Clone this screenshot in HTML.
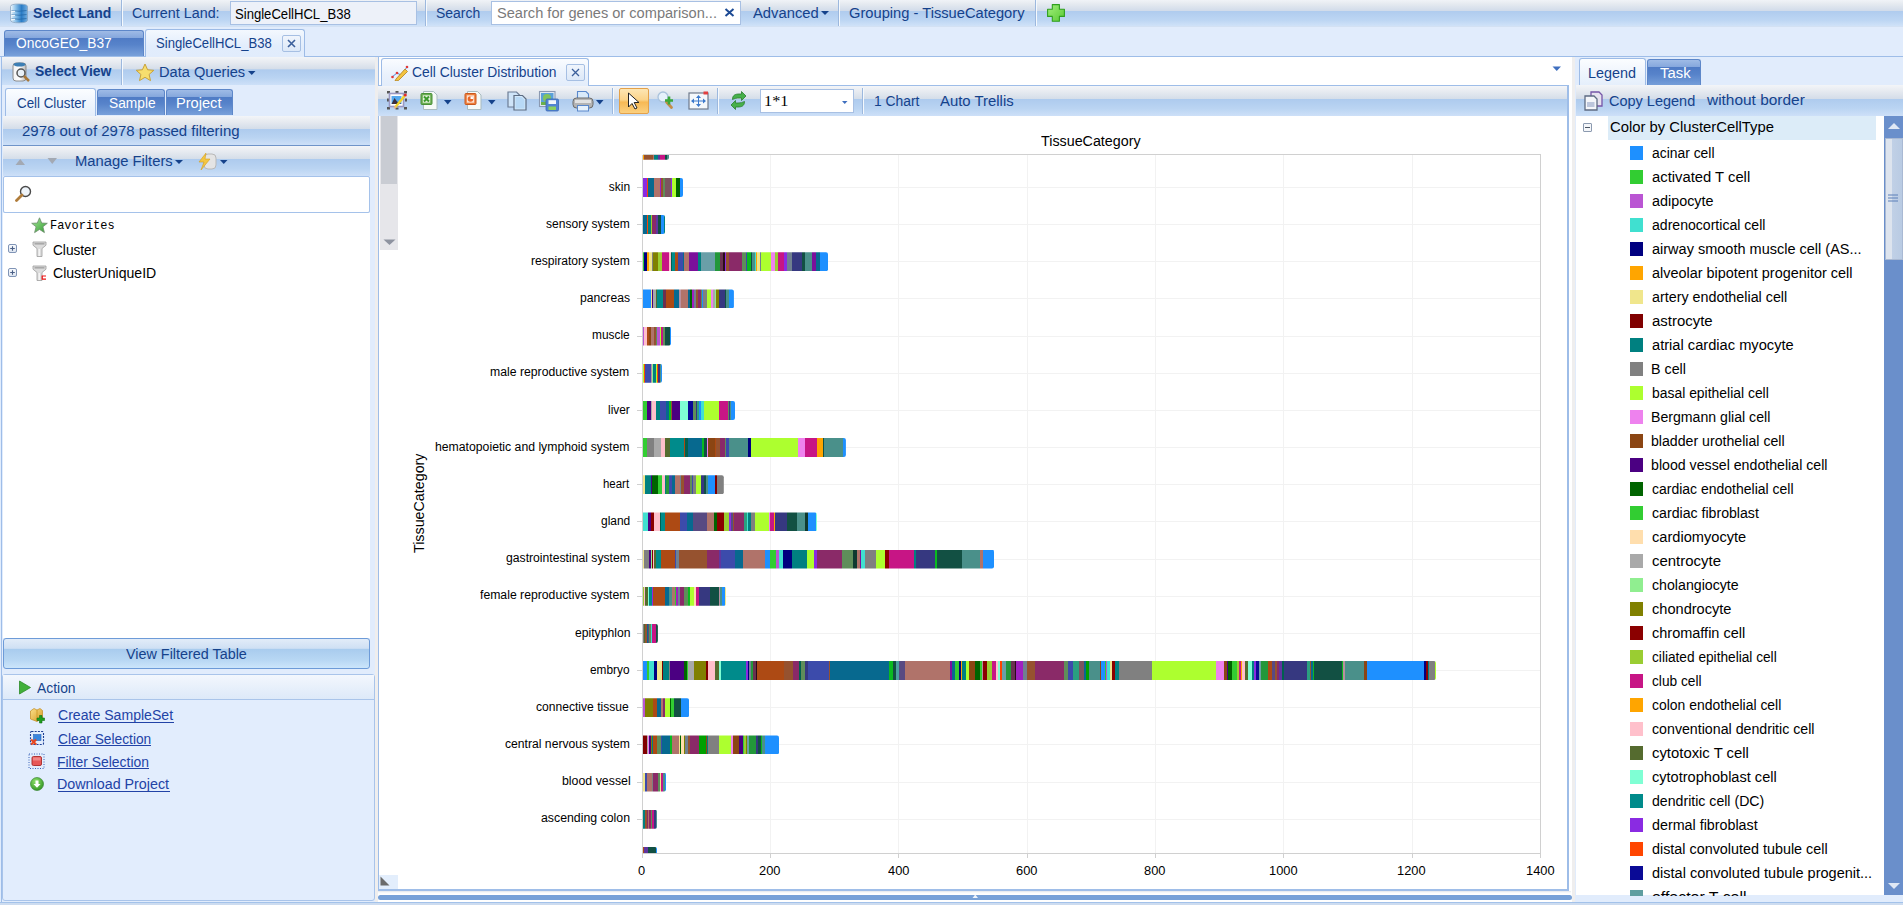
<!DOCTYPE html>
<html><head><meta charset="utf-8"><style>
*{box-sizing:border-box;margin:0;padding:0}
html,body{width:1903px;height:905px;overflow:hidden;background:#e1ecfc;font-family:"Liberation Sans",sans-serif}
.a{position:absolute}
.t{position:absolute;white-space:nowrap;transform-origin:0 0}
svg{position:absolute;overflow:hidden}
</style></head><body>
<div class="a" style="left:0px;top:0px;width:1903px;height:27px;background:linear-gradient(#f0f3f7 0%,#e5eaf0 15%,#d2dcea 39%,#afcbee 40%,#bdd6f3 75%,#d3e4f9 100%);"></div>
<div class="a" style="left:0px;top:26px;width:1903px;height:1px;background:#d3e1f3"></div>
<div class="a" style="left:121px;top:0px;width:1px;height:26px;background:#9cb8de;box-shadow:1px 0 0 #f5f9fd;"></div>
<div class="a" style="left:425px;top:0px;width:1px;height:26px;background:#9cb8de;box-shadow:1px 0 0 #f5f9fd;"></div>
<div class="a" style="left:838px;top:0px;width:1px;height:26px;background:#9cb8de;box-shadow:1px 0 0 #f5f9fd;"></div>
<div class="a" style="left:1035px;top:0px;width:1px;height:26px;background:#9cb8de;box-shadow:1px 0 0 #f5f9fd;"></div>
<div class="a" style="left:230px;top:1px;width:187px;height:24px;background:#edf1f9;border:1px solid #a8c0e3"></div>
<div class="a" style="left:491px;top:1px;width:250px;height:24px;background:#fff;border:1px solid #a8c0e3"></div>
<svg style="left:724px;top:8px" width="11" height="9"><path d="M1.5 1L9.5 8M9.5 1L1.5 8" stroke="#1c4a94" stroke-width="2"/></svg>
<svg style="left:821px;top:11px" width="9" height="5"><path d="M0 0H8L4 4Z" fill="#15428b"/></svg>
<svg style="left:9px;top:3px" width="20" height="21" viewBox="0 0 20 21"><defs><linearGradient id="dbg" x1="0" x2="1"><stop offset="0" stop-color="#f4f9fd"/><stop offset=".3" stop-color="#8cc2ea"/><stop offset=".65" stop-color="#2a7cc6"/><stop offset="1" stop-color="#74aee0"/></linearGradient></defs>
<path d="M1.5 3.5Q1.5 1 10 1Q18.5 1 18.5 3.5V17Q18.5 19.8 10 19.8Q1.5 19.8 1.5 17Z" fill="url(#dbg)" stroke="#8aa6c2" stroke-width=".8"/>
<path d="M2.5 7.5Q10 9 17.5 7.5M2.5 11.5Q10 13 17.5 11.5M2.5 15.5Q10 17 17.5 15.5" stroke="#1f5f9e" stroke-width=".9" fill="none" opacity=".7"/><path d="M2.5 8.3H6M2.5 12.3H6M2.5 16.3H6" stroke="#fff" stroke-width="1"/></svg>
<svg style="left:1047px;top:4px" width="18" height="18" viewBox="0 0 18 18"><defs><linearGradient id="gp" x1="0" y1="0" x2="1" y2="1"><stop offset="0" stop-color="#a3f07c"/><stop offset="1" stop-color="#58c834"/></linearGradient></defs><path d="M5.3 0.6H12.4V5.3H17.4V12.4H12.4V17.2H5.3V12.4H0.6V5.3H5.3Z" fill="url(#gp)" stroke="#2f9f1e" stroke-width="1.1" stroke-linejoin="round"/></svg>
<div class="a" style="left:4px;top:30px;width:140px;height:26px;background:linear-gradient(#9fbbe6 0%,#86a8dd 26%,#4f7bc5 28%,#5783ca 55%,#78a0da 100%);border:1px solid #5d87c9;border-bottom:none;border-radius:3px 3px 0 0;"></div>
<div class="a" style="left:145px;top:29px;width:160px;height:28px;background:linear-gradient(#fbfdff 0%,#e4eefb 100%);border:1px solid #9dbbe6;border-bottom:none;border-radius:3px 3px 0 0;background:linear-gradient(#f3f8fe 0%,#e2edfc 60%,#e1ecfc 100%);"></div>
<div class="a" style="left:282px;top:35px;width:19px;height:17px;border:1px solid #a6bfe3;border-radius:2px;background:linear-gradient(#f0f5fc,#dce8f8)"></div>
<svg style="left:287px;top:39px" width="9" height="9"><path d="M1 1L8 8M8 1L1 8" stroke="#3b5f9b" stroke-width="1.6"/></svg>
<div class="a" style="left:1px;top:57px;width:374px;height:845px;background:#e1ecfc;border-left:1px solid #9ebde8"></div>
<div class="a" style="left:2px;top:57px;width:373px;height:28px;background:linear-gradient(#f3f5f8 0%,#e6eaf0 20%,#d4dde9 44%,#aecbee 45%,#bad4f2 75%,#cde0f8 100%);"></div>
<div class="a" style="left:121px;top:59px;width:1px;height:26px;background:#9cb8de;box-shadow:1px 0 0 #f5f9fd;"></div>
<svg style="left:248px;top:71px" width="8" height="5"><path d="M0 0H7.5L3.75 4Z" fill="#15428b"/></svg>
<svg style="left:12px;top:61px" width="19" height="22" viewBox="0 0 19 22"><defs><linearGradient id="svg1" x1="0" x2="1"><stop offset="0" stop-color="#f2f2f2"/><stop offset=".5" stop-color="#ffffff"/><stop offset="1" stop-color="#b9b9b9"/></linearGradient></defs>
<rect x="1" y="2" width="13" height="18" rx="3" fill="url(#svg1)" stroke="#8d8d8d"/><ellipse cx="7.5" cy="3.5" rx="6" ry="2" fill="#3d7fb5"/>
<circle cx="9" cy="12" r="4" fill="#e9f1f8" stroke="#555" stroke-width="1.5"/><path d="M12 15L17 20" stroke="#a8783a" stroke-width="2.5"/></svg>
<svg style="left:135px;top:63px" width="20" height="19" viewBox="0 0 20 19"><path d="M10 1L12.6 6.8L18.8 7.3L14.1 11.4L15.5 17.6L10 14.3L4.5 17.6L5.9 11.4L1.2 7.3L7.4 6.8Z" fill="#f7de6e" stroke="#c9a23a" stroke-width="1"/></svg>
<div class="a" style="left:5px;top:88px;width:91px;height:28px;background:linear-gradient(#fbfdff 0%,#e4eefb 100%);border:1px solid #9dbbe6;border-bottom:none;border-radius:3px 3px 0 0;"></div>
<div class="a" style="left:97px;top:89px;width:68px;height:26px;background:linear-gradient(#9fbbe6 0%,#86a8dd 26%,#4f7bc5 28%,#5783ca 55%,#78a0da 100%);border:1px solid #5d87c9;border-bottom:none;border-radius:3px 3px 0 0;"></div>
<div class="a" style="left:166px;top:89px;width:67px;height:26px;background:linear-gradient(#9fbbe6 0%,#86a8dd 26%,#4f7bc5 28%,#5783ca 55%,#78a0da 100%);border:1px solid #5d87c9;border-bottom:none;border-radius:3px 3px 0 0;"></div>
<div class="a" style="left:3px;top:116px;width:367px;height:29px;background:linear-gradient(#f3f5f8 0%,#e6eaf0 20%,#d4dde9 44%,#aecbee 45%,#bad4f2 75%,#cde0f8 100%);"></div>
<div class="a" style="left:3px;top:145px;width:367px;height:1px;background:#6f94c9"></div>
<div class="a" style="left:3px;top:146px;width:367px;height:30px;background:linear-gradient(#f3f5f8 0%,#e6eaf0 20%,#d4dde9 44%,#aecbee 45%,#bad4f2 75%,#cde0f8 100%);"></div>
<svg style="left:15px;top:158px" width="11" height="8"><path d="M0.5 7H10L5.25 1Z" fill="#a3a9b3"/></svg>
<svg style="left:47px;top:157px" width="11" height="8"><path d="M0.5 1H10L5.25 7Z" fill="#a3a9b3"/></svg>
<svg style="left:175px;top:160px" width="9" height="5"><path d="M0 0H8L4 4Z" fill="#15428b"/></svg>
<svg style="left:197px;top:152px" width="21" height="19" viewBox="0 0 21 19"><rect x="7" y="2" width="12" height="15" rx="4" fill="#e4e4e4" stroke="#b8b8b8"/><path d="M9 1L2 10H7L4 18L13 7H8Z" fill="#f3c641" stroke="#d59d1c" stroke-width=".6"/></svg>
<svg style="left:220px;top:160px" width="8" height="5"><path d="M0 0H7.5L3.75 4Z" fill="#15428b"/></svg>
<div class="a" style="left:3px;top:176px;width:367px;height:37px;background:#fff;border:1px solid #a5c2ea;border-radius:2px"></div>
<svg style="left:15px;top:185px" width="18" height="18" viewBox="0 0 18 18"><circle cx="10.5" cy="6.5" r="5" fill="#eef4fa" stroke="#4a4a4a" stroke-width="1.4"/><path d="M7 10L1.5 15.5" stroke="#b07c3a" stroke-width="2.8" stroke-linecap="round"/></svg>
<div class="a" style="left:3px;top:213px;width:367px;height:425px;background:#fff"></div>
<svg style="left:31px;top:217px" width="17" height="17" viewBox="0 0 17 17"><defs><linearGradient id="stg" x1="0" y1="0" x2="1" y2="1"><stop offset="0" stop-color="#a8e89a"/><stop offset="1" stop-color="#2f9a2f"/></linearGradient></defs><path d="M8.5 0.8L10.7 6L16.3 6.3L11.9 9.8L13.4 15.6L8.5 12.4L3.6 15.6L5.1 9.8L0.7 6.3L6.3 6Z" fill="url(#stg)" stroke="#6d8c6d" stroke-width=".8"/></svg>
<div class="a" style="left:8px;top:244px;width:9px;height:9px;border:1px solid #8094b6;border-radius:2px;background:linear-gradient(#f8fafd,#dde5f0)"></div>
<svg style="left:8px;top:244px" width="9" height="9"><path d="M2.2 4.5H6.8M4.5 2.2V6.8" stroke="#4a5f86" stroke-width="1.1"/></svg>
<div class="a" style="left:8px;top:268px;width:9px;height:9px;border:1px solid #8094b6;border-radius:2px;background:linear-gradient(#f8fafd,#dde5f0)"></div>
<svg style="left:8px;top:268px" width="9" height="9"><path d="M2.2 4.5H6.8M4.5 2.2V6.8" stroke="#4a5f86" stroke-width="1.1"/></svg>
<svg style="left:32px;top:241px" width="15" height="17" viewBox="0 0 15 17"><path d="M1 1H14V4.2L10 7.5V15.5H5V7.5L1 4.2Z" fill="#dcdcdc" stroke="#9d9d9d" stroke-width=".8"/><rect x="2.5" y="2" width="10" height="1.6" fill="#a9a9a9"/><rect x="6.5" y="8" width="1.5" height="7" fill="#f4f4f4"/></svg>
<svg style="left:32px;top:265px" width="15" height="17" viewBox="0 0 15 17"><path d="M1 1H14V4.2L10 7.5V15.5H5V7.5L1 4.2Z" fill="#dcdcdc" stroke="#9d9d9d" stroke-width=".8"/><rect x="2.5" y="2" width="10" height="1.6" fill="#a9a9a9"/><rect x="6.5" y="8" width="1.5" height="7" fill="#f4f4f4"/><path d="M14 11H10.2V14.2H14" fill="none" stroke="#ee1010" stroke-width="1.2"/></svg>
<div class="a" style="left:3px;top:638px;width:367px;height:31px;border:1px solid #6d9bd8;border-radius:3px;background:linear-gradient(#e2ecf8 0%,#cfe0f4 32%,#a9ccee 36%,#b9d8f4 75%,#cbe5fb 100%)"></div>
<div class="a" style="left:2px;top:674px;width:373px;height:227px;border:1px solid #a9c4ea;border-radius:3px 3px 3px 3px;background:#e2edfd"></div>
<div class="a" style="left:3px;top:675px;width:371px;height:24px;background:linear-gradient(#f3f7fd,#dde9f9)"></div>
<div class="a" style="left:3px;top:699px;width:371px;height:1px;background:#a9c4ea"></div>
<svg style="left:18px;top:680px" width="14" height="15" viewBox="0 0 14 15"><path d="M1.5 1L12.5 7.5L1.5 14Z" fill="#41b03a" stroke="#2b8a27" stroke-width=".8"/></svg>
<div class="a" style="left:58px;top:722px;width:116px;height:1px;background:#2243a6"></div>
<div class="a" style="left:58px;top:745px;width:93px;height:1px;background:#2243a6"></div>
<div class="a" style="left:58px;top:768px;width:91px;height:1px;background:#2243a6"></div>
<div class="a" style="left:58px;top:791px;width:112px;height:1px;background:#2243a6"></div>
<svg style="left:29px;top:707px" width="17" height="17" viewBox="0 0 17 17"><defs><linearGradient id="gold" x1="0" x2="1" y1="0" y2="1"><stop offset="0" stop-color="#fbe08a"/><stop offset="1" stop-color="#d69a22"/></linearGradient></defs><path d="M1.5 4L5 1.5L8 3L11 1.5L13.5 3.5V11L8 14.5L1.5 12Z" fill="url(#gold)" stroke="#c18a1c" stroke-width=".7"/><path d="M8 3V14" stroke="#c99524" stroke-width=".8"/><path d="M10.5 8.5H13V11H15.5V13.5H13V16H10.5V13.5H8V11H10.5Z" fill="#1e9e1e" stroke="#127012" stroke-width=".6"/></svg>
<svg style="left:29px;top:730px" width="16" height="16" viewBox="0 0 16 16"><rect x="1.5" y="1.5" width="13" height="13" rx="1" fill="none" stroke="#1d3f94" stroke-width="1.1" stroke-dasharray="2 1.2"/><rect x="4.5" y="4.5" width="7.5" height="6" fill="#3a86de" stroke="#2a62b5" stroke-width=".6"/><path d="M2.2 9.5L7.2 14.5M7.2 9.5L2.2 14.5" stroke="#e8461e" stroke-width="2"/></svg>
<svg style="left:28px;top:753px" width="17" height="16" viewBox="0 0 17 16"><rect x="1" y="1" width="15" height="14.5" fill="none" stroke="#3a63b8" stroke-width="1" stroke-dasharray="1 1.5"/><rect x="4" y="3.5" width="9.5" height="9" rx="1.5" fill="#e85858" stroke="#a82828" stroke-width=".9"/><rect x="5" y="4.5" width="7.5" height="3" fill="#f59a9a" opacity=".7"/></svg>
<svg style="left:30px;top:777px" width="14" height="14" viewBox="0 0 14 14"><defs><radialGradient id="dg" cx=".4" cy=".3" r=".8"><stop offset="0" stop-color="#8ddf6a"/><stop offset="1" stop-color="#2b8f1e"/></radialGradient></defs><circle cx="7" cy="7" r="6.5" fill="url(#dg)" stroke="#2a7a22" stroke-width=".6"/><path d="M5.5 3.5H8.5V7H10.5L7 10.8L3.5 7H5.5Z" fill="#fff"/></svg>
<div class="a" style="left:375px;top:57px;width:3px;height:845px;background:#efeeee"></div>
<div class="a" style="left:1572px;top:57px;width:3px;height:845px;background:#efeeee"></div>
<div class="a" style="left:378px;top:56px;width:1194px;height:846px;background:#fff"></div>
<div class="a" style="left:378px;top:56px;width:1191px;height:30px;background:#fff;border-top:1px solid #9ebde8"></div>
<div class="a" style="left:378px;top:57px;width:1px;height:834px;background:#9ebde8"></div>
<svg style="left:1552px;top:66px" width="10" height="6"><path d="M0.5 0.5H9L4.75 5Z" fill="#3f6fbf"/></svg>
<div class="a" style="left:378px;top:85px;width:1191px;height:31px;background:linear-gradient(#f3f5f8 0%,#e6eaf0 20%,#d4dde9 44%,#aecbee 45%,#bad4f2 75%,#cde0f8 100%);border-top:1px solid #9ebde8;border-right:2px solid #9ebde8"></div>
<div class="a" style="left:381px;top:58px;width:208px;height:28px;background:linear-gradient(#fbfdff 0%,#e4eefb 100%);border:1px solid #9dbbe6;border-bottom:none;border-radius:3px 3px 0 0;background:linear-gradient(#fafcff 0%,#e9f1fc 60%,#e3edfb 100%);"></div>
<div class="a" style="left:612px;top:88px;width:1px;height:26px;background:#9cb8de;box-shadow:1px 0 0 #f5f9fd;"></div>
<div class="a" style="left:717px;top:88px;width:1px;height:26px;background:#9cb8de;box-shadow:1px 0 0 #f5f9fd;"></div>
<div class="a" style="left:862px;top:88px;width:1px;height:26px;background:#9cb8de;box-shadow:1px 0 0 #f5f9fd;"></div>
<svg style="left:391px;top:64px" width="18" height="17" viewBox="0 0 18 17"><path d="M1 13L6 9L10 11L16 3" fill="none" stroke="#3b7dd8" stroke-width=".9"/><circle cx="1.5" cy="13" r="1.3" fill="#e03a3a"/><circle cx="6" cy="9" r="1.3" fill="#e03a3a"/><circle cx="16" cy="3" r="1.3" fill="#e03a3a"/><path d="M5 15L14 5L16.5 7.5L7.5 16.5L4 17Z" fill="#f4c440" stroke="#b3811d" stroke-width=".8"/></svg>
<div class="a" style="left:566px;top:64px;width:19px;height:17px;border:1px solid #a6bfe3;border-radius:2px;background:linear-gradient(#f0f5fc,#dce8f8)"></div>
<svg style="left:571px;top:68px" width="9" height="9"><path d="M1 1L8 8M8 1L1 8" stroke="#3b5f9b" stroke-width="1.3"/></svg>
<div class="a" style="left:619px;top:88px;width:30px;height:26px;border:1px solid #e3a14a;border-radius:2px;background:linear-gradient(#fde6b4 0%,#fbd389 45%,#f7b955 55%,#fbd07f 100%)"></div>
<svg style="left:627px;top:92px" width="14" height="18" viewBox="0 0 14 18"><path d="M1.5 1V15L5 11.5L8 17L10 16L7.2 10.5H12Z" fill="#fff" stroke="#222" stroke-width="1"/></svg>
<div class="a" style="left:760px;top:89px;width:94px;height:24px;background:#fff;border:1px solid #a8c0e3"></div>
<svg style="left:842px;top:101px" width="6" height="3"><path d="M0 0H5.5L2.75 3Z" fill="#3f6fbf"/></svg>
<svg style="left:386px;top:90px" width="22" height="21" viewBox="0 0 22 21"><g fill="#555"><rect x="1" y="1" width="3" height="2.5"/><rect x="9.5" y="1" width="3" height="2"/><rect x="18" y="1" width="3" height="2.5"/><rect x="1" y="8.5" width="2" height="3"/><rect x="19" y="8.5" width="2" height="3"/><rect x="1" y="17" width="3" height="2.5"/><rect x="9.5" y="17.5" width="3" height="2"/><rect x="18" y="17" width="3" height="2.5"/></g>
<rect x="3.5" y="3.5" width="14" height="13" fill="#fff" stroke="#9a98c2" stroke-width="1.6"/><rect x="5.5" y="6" width="10" height="8" fill="#56a8ee"/><path d="M5.5 14L8.5 8L11 11.5L15.5 14Z" fill="#3a3040"/><path d="M9 17.5L18.5 6" stroke="#f2d42a" stroke-width="2.4"/><path d="M8.6 18.5L9.6 16.2" stroke="#f0b08a" stroke-width="1.6"/><circle cx="19.3" cy="5" r="1.5" fill="#e02828"/></svg>
<svg style="left:420px;top:90px" width="19" height="21" viewBox="0 0 19 21"><path d="M3.5 1.5H13.5L17 5V19.5H3.5Z" fill="#f6faf8" stroke="#a9bbc0" stroke-width="1"/><rect x="1" y="3.5" width="11" height="11" rx="1" fill="#6aad52" stroke="#4a9038" stroke-width="1"/><rect x="2.8" y="5.3" width="7.4" height="7.4" fill="#e4f1dc"/><path d="M4 6.5L9 11.5M9 6.5L4 11.5" stroke="#3c9a2c" stroke-width="2"/></svg>
<svg style="left:464px;top:90px" width="19" height="21" viewBox="0 0 19 21"><path d="M3.5 1.5H13.5L17 5V19.5H3.5Z" fill="#f6faf8" stroke="#a9bbc0" stroke-width="1"/><rect x="1" y="3.5" width="11" height="11" rx="1" fill="#ee7f3c" stroke="#c9581e" stroke-width="1"/><rect x="2.8" y="5.3" width="7.4" height="7.4" fill="#fbe3d4"/><circle cx="6.5" cy="9" r="2.8" fill="#e8672a"/><path d="M6.5 9V6.2A2.8 2.8 0 0 1 9.3 9Z" fill="#fff"/></svg>
<svg style="left:444px;top:100px" width="8" height="5"><path d="M0 0H7.5L3.75 4.5Z" fill="#15428b"/></svg>
<svg style="left:488px;top:100px" width="8" height="5"><path d="M0 0H7.5L3.75 4.5Z" fill="#15428b"/></svg>
<svg style="left:596px;top:100px" width="8" height="5"><path d="M0 0H7.5L3.75 4.5Z" fill="#15428b"/></svg>
<svg style="left:506px;top:90px" width="22" height="21" viewBox="0 0 22 21"><path d="M2 2H10.5L13.5 5V17H2Z" fill="#cfe4f8" stroke="#6d7d95" stroke-width="1.2"/><path d="M8 5.5H16.5L20 9V20H8Z" fill="#d3e8fb" stroke="#5d6c82" stroke-width="1.2"/><path d="M9.5 7H15.5L18.5 10V18.5H9.5Z" fill="#b8d9f6"/></svg>
<svg style="left:538px;top:90px" width="22" height="22" viewBox="0 0 22 22"><rect x="1.5" y="1.5" width="15.5" height="15" fill="#e4ecf4" stroke="#8b99b2" stroke-width="1.1"/><rect x="3" y="3" width="12.5" height="12" fill="#5aa0d8"/><circle cx="9" cy="8" r="4" fill="#82c45e"/><rect x="3" y="12" width="12.5" height="3" fill="#6ab04a"/><rect x="8" y="9" width="12.5" height="12" rx="1.2" fill="#5184d2" stroke="#3b68b4" stroke-width=".8"/><rect x="10.5" y="10.2" width="7.5" height="3.8" fill="#f2f6fc"/><rect x="10.5" y="16.5" width="7.5" height="3.5" fill="#8cd060"/></svg>
<svg style="left:572px;top:90px" width="22" height="22" viewBox="0 0 22 22"><path d="M5.5 1.5H14L16.5 4V10H5.5Z" fill="#d9eafa" stroke="#5a88cc" stroke-width="1.1"/><rect x="1" y="8" width="20" height="10" rx="3.5" fill="#b4b4b4" stroke="#6a6a6a" stroke-width="1"/><rect x="3" y="10" width="16" height="3" fill="#e2e2e2"/><rect x="5.5" y="15.5" width="11" height="5.5" fill="#e6f1fc" stroke="#5a88cc" stroke-width="1"/></svg>
<svg style="left:656px;top:90px" width="20" height="20" viewBox="0 0 20 20"><circle cx="7" cy="7" r="5" fill="#e6f1fb" stroke="#a9c2dc" stroke-width="1.3"/><path d="M10.5 12L15.5 17.5" stroke="#c48d48" stroke-width="2.8" stroke-linecap="round"/><path d="M9 10.5H17M13 6.5V14.5" stroke="#3aa83a" stroke-width="2.6"/></svg>
<svg style="left:688px;top:90px" width="21" height="21" viewBox="0 0 21 21"><rect x="1" y="3" width="19" height="16" fill="#f4f8fc" stroke="#6e7a8c" stroke-width="1.2"/><path d="M10.5 5L13 8H8ZM10.5 17L13 14H8ZM3 11L6 8.5V13.5ZM18 11L15 8.5V13.5Z" fill="#3a78cc"/><path d="M10.5 8V14M6 11H15" stroke="#3a78cc" stroke-width="1"/><rect x="15.5" y="1.5" width="4.5" height="3" fill="#e24040"/></svg>
<svg style="left:730px;top:90px" width="17" height="21" viewBox="0 0 17 21"><path d="M2.5 9.5C2.5 5 5.5 4 9 4H11.5V1.5L16 6L11.5 10.5V8H9C6.5 8 4.5 8.5 2.5 9.5Z" fill="#46b04a" stroke="#2a7e2e" stroke-width=".8"/><path d="M14.5 11.5C14.5 16 11.5 17 8 17H5.5V19.5L1 15L5.5 10.5V13H8C10.5 13 12.5 12.5 14.5 11.5Z" fill="#46b04a" stroke="#2a7e2e" stroke-width=".8"/></svg>
<div class="a" style="left:379px;top:116px;width:1190px;height:775px;background:#fff;border-right:2px solid #9ebde8;border-bottom:2px solid #9ebde8"></div>
<div class="a" style="left:380px;top:116px;width:18px;height:134px;background:#e6e6ea"></div>
<div class="a" style="left:381px;top:116px;width:16px;height:68px;background:#c9ccd3"></div>
<svg style="left:383px;top:239px" width="13" height="7"><path d="M0.5 0.5H12.5L6.5 6Z" fill="#8e93a0"/></svg>
<div class="a" style="left:379px;top:875px;width:19px;height:14px;background:#e3eefc"></div>
<svg style="left:380px;top:876px" width="10" height="10"><path d="M0.5 0.5L9.5 9.5H0.5Z" fill="#6b6b6b"/></svg>
<div class="a" style="left:378px;top:895px;width:1194px;height:5px;background:#77a1d8;border-radius:3px"></div>
<svg style="left:972px;top:894px" width="7" height="5"><path d="M0.5 4H6L3.25 0.5Z" fill="#eef4fc"/></svg>
<div class="a" style="left:378px;top:891px;width:1193px;height:3px;background:linear-gradient(#e2e6ec,#f6f8fa 50%,#ffffff)"></div>
<div class="a" style="left:1575px;top:57px;width:328px;height:845px;background:#e1ecfc"></div>
<div class="a" style="left:1579px;top:58px;width:67px;height:28px;background:linear-gradient(#fbfdff 0%,#e4eefb 100%);border:1px solid #9dbbe6;border-bottom:none;border-radius:3px 3px 0 0;"></div>
<div class="a" style="left:1647px;top:59px;width:54px;height:27px;background:linear-gradient(#9fbbe6 0%,#86a8dd 26%,#4f7bc5 28%,#5783ca 55%,#78a0da 100%);border:1px solid #5d87c9;border-bottom:none;border-radius:3px 3px 0 0;"></div>
<div class="a" style="left:1576px;top:85px;width:327px;height:31px;background:linear-gradient(#f3f5f8 0%,#e6eaf0 20%,#d4dde9 44%,#aecbee 45%,#bad4f2 75%,#cde0f8 100%);"></div>
<svg style="left:1583px;top:90px" width="21" height="21" viewBox="0 0 21 21"><path d="M8 2H16L19 5V16H8Z" fill="#e6e2ef" stroke="#7656a8" stroke-width="1.3"/><path d="M2 6H11L14 9V20H2Z" fill="#f4f6fa" stroke="#5d6b82" stroke-width="1.3"/><rect x="4" y="12" width="7.5" height="5" fill="#bcc6dc"/></svg>
<div class="a" style="left:1576px;top:116px;width:308px;height:779px;background:#fff"></div>
<div class="a" style="left:1608px;top:116px;width:268px;height:24px;background:#dcecf8"></div>
<div class="a" style="left:1583px;top:123px;width:9px;height:9px;border:1px solid #8c9ab0;background:#f4f6f9;border-radius:1px"></div>
<svg style="left:1583px;top:123px" width="9" height="9"><path d="M2 4.5H7" stroke="#4b5563" stroke-width="1"/></svg>
<div class="a" style="left:1884px;top:116px;width:19px;height:779px;background:#6a8fcb"></div>
<div class="a" style="left:1885px;top:138px;width:18px;height:122px;background:linear-gradient(90deg,#dde4ee 0%,#dde4ee 35%,#c0d0e6 40%,#b9cbe3 100%);border:1px solid #a9b9d3"></div>
<svg style="left:1887px;top:122px" width="14" height="8"><path d="M1 7H13L7 1Z" fill="#dfe8f5"/></svg>
<svg style="left:1887px;top:882px" width="14" height="8"><path d="M1 1H13L7 7Z" fill="#dfe8f5"/></svg>
<svg style="left:1888px;top:194px" width="10" height="8"><path d="M0 1H10M0 4H10M0 7H10" stroke="#5b7fb8" stroke-width="1"/></svg>
<div class="a" style="left:1630px;top:146px;width:13px;height:14px;background:#1e90ff"></div>
<div class="a" style="left:1630px;top:170px;width:13px;height:14px;background:#32cd32"></div>
<div class="a" style="left:1630px;top:194px;width:13px;height:14px;background:#ba55d3"></div>
<div class="a" style="left:1630px;top:218px;width:13px;height:14px;background:#40e0d0"></div>
<div class="a" style="left:1630px;top:242px;width:13px;height:14px;background:#000080"></div>
<div class="a" style="left:1630px;top:266px;width:13px;height:14px;background:#ffa500"></div>
<div class="a" style="left:1630px;top:290px;width:13px;height:14px;background:#f0e68c"></div>
<div class="a" style="left:1630px;top:314px;width:13px;height:14px;background:#800000"></div>
<div class="a" style="left:1630px;top:338px;width:13px;height:14px;background:#008080"></div>
<div class="a" style="left:1630px;top:362px;width:13px;height:14px;background:#808080"></div>
<div class="a" style="left:1630px;top:386px;width:13px;height:14px;background:#adff2f"></div>
<div class="a" style="left:1630px;top:410px;width:13px;height:14px;background:#ee82ee"></div>
<div class="a" style="left:1630px;top:434px;width:13px;height:14px;background:#8b4513"></div>
<div class="a" style="left:1630px;top:458px;width:13px;height:14px;background:#4b0082"></div>
<div class="a" style="left:1630px;top:482px;width:13px;height:14px;background:#006400"></div>
<div class="a" style="left:1630px;top:506px;width:13px;height:14px;background:#32cd32"></div>
<div class="a" style="left:1630px;top:530px;width:13px;height:14px;background:#ffdead"></div>
<div class="a" style="left:1630px;top:554px;width:13px;height:14px;background:#a9a9a9"></div>
<div class="a" style="left:1630px;top:578px;width:13px;height:14px;background:#90ee90"></div>
<div class="a" style="left:1630px;top:602px;width:13px;height:14px;background:#808000"></div>
<div class="a" style="left:1630px;top:626px;width:13px;height:14px;background:#8b0000"></div>
<div class="a" style="left:1630px;top:650px;width:13px;height:14px;background:#9acd32"></div>
<div class="a" style="left:1630px;top:674px;width:13px;height:14px;background:#c71585"></div>
<div class="a" style="left:1630px;top:698px;width:13px;height:14px;background:#ffa500"></div>
<div class="a" style="left:1630px;top:722px;width:13px;height:14px;background:#ffc0cb"></div>
<div class="a" style="left:1630px;top:746px;width:13px;height:14px;background:#556b2f"></div>
<div class="a" style="left:1630px;top:770px;width:13px;height:14px;background:#7fffd4"></div>
<div class="a" style="left:1630px;top:794px;width:13px;height:14px;background:#008b8b"></div>
<div class="a" style="left:1630px;top:818px;width:13px;height:14px;background:#8a2be2"></div>
<div class="a" style="left:1630px;top:842px;width:13px;height:14px;background:#ff4500"></div>
<div class="a" style="left:1630px;top:866px;width:13px;height:14px;background:#0a0a96"></div>
<div class="a" style="left:1630px;top:890px;width:13px;height:14px;background:#5f9ea0"></div>
<div class="t" style="left:33.10px;top:4.78px;font-size:15.5px;line-height:15.5px;font-weight:bold;color:#15428b;font-family:'Liberation Sans',sans-serif;transform:scale(0.9003,1.0);">Select Land</div>
<div class="t" style="left:132.40px;top:4.88px;font-size:15.5px;line-height:15.5px;font-weight:normal;color:#15428b;font-family:'Liberation Sans',sans-serif;transform:scale(0.9243,1.0);">Current Land:</div>
<div class="t" style="left:235.40px;top:5.78px;font-size:15.5px;line-height:15.5px;font-weight:normal;color:#000;font-family:'Liberation Sans',sans-serif;transform:scale(0.8447,1.0);">SingleCellHCL_B38</div>
<div class="t" style="left:436.00px;top:4.88px;font-size:15.5px;line-height:15.5px;font-weight:normal;color:#15428b;font-family:'Liberation Sans',sans-serif;transform:scale(0.8991,1.0);">Search</div>
<div class="t" style="left:496.50px;top:5.48px;font-size:15.5px;line-height:15.5px;font-weight:normal;color:#7a7a7a;font-family:'Liberation Sans',sans-serif;transform:scale(0.9420,1.0);">Search for genes or comparison...</div>
<div class="t" style="left:752.90px;top:4.88px;font-size:15.5px;line-height:15.5px;font-weight:normal;color:#15428b;font-family:'Liberation Sans',sans-serif;transform:scale(0.9529,1.0);">Advanced</div>
<div class="t" style="left:848.60px;top:4.88px;font-size:15.5px;line-height:15.5px;font-weight:normal;color:#15428b;font-family:'Liberation Sans',sans-serif;transform:scale(0.9475,1.0);">Grouping - TissueCategory</div>
<div class="t" style="left:15.80px;top:35.38px;font-size:15.5px;line-height:15.5px;font-weight:normal;color:#fff;font-family:'Liberation Sans',sans-serif;transform:scale(0.8891,1.0);">OncoGEO_B37</div>
<div class="t" style="left:156.40px;top:35.38px;font-size:15.5px;line-height:15.5px;font-weight:normal;color:#15428b;font-family:'Liberation Sans',sans-serif;transform:scale(0.8447,1.0);">SingleCellHCL_B38</div>
<div class="t" style="left:34.50px;top:63.38px;font-size:15.5px;line-height:15.5px;font-weight:bold;color:#15428b;font-family:'Liberation Sans',sans-serif;transform:scale(0.8981,1.0);">Select View</div>
<div class="t" style="left:158.66px;top:64.38px;font-size:15.5px;line-height:15.5px;font-weight:normal;color:#15428b;font-family:'Liberation Sans',sans-serif;transform:scale(0.9429,1.0);">Data Queries</div>
<div class="t" style="left:16.90px;top:94.68px;font-size:15.5px;line-height:15.5px;font-weight:normal;color:#15428b;font-family:'Liberation Sans',sans-serif;transform:scale(0.8619,1.0);">Cell Cluster</div>
<div class="t" style="left:108.50px;top:94.78px;font-size:15.5px;line-height:15.5px;font-weight:normal;color:#fff;font-family:'Liberation Sans',sans-serif;transform:scale(0.8877,1.0);">Sample</div>
<div class="t" style="left:175.86px;top:94.78px;font-size:15.5px;line-height:15.5px;font-weight:normal;color:#fff;font-family:'Liberation Sans',sans-serif;transform:scale(0.9430,1.0);">Project</div>
<div class="t" style="left:22.20px;top:122.68px;font-size:15.5px;line-height:15.5px;font-weight:normal;color:#15428b;font-family:'Liberation Sans',sans-serif;transform:scale(0.9675,1.0);">2978 out of 2978 passed filtering</div>
<div class="t" style="left:75.25px;top:152.88px;font-size:15.5px;line-height:15.5px;font-weight:normal;color:#15428b;font-family:'Liberation Sans',sans-serif;transform:scale(0.9532,1.0);">Manage Filters</div>
<div class="t" style="left:49.58px;top:219.14px;font-size:13px;line-height:13px;font-weight:normal;color:#000;font-family:'Liberation Mono',sans-serif;transform:scale(0.9209,1.0);">Favorites</div>
<div class="t" style="left:52.70px;top:241.58px;font-size:15.5px;line-height:15.5px;font-weight:normal;color:#000;font-family:'Liberation Sans',sans-serif;transform:scale(0.8808,1.0);">Cluster</div>
<div class="t" style="left:52.70px;top:265.28px;font-size:15.5px;line-height:15.5px;font-weight:normal;color:#000;font-family:'Liberation Sans',sans-serif;transform:scale(0.9082,1.0);">ClusterUniqueID</div>
<div class="t" style="left:126.00px;top:645.58px;font-size:15.5px;line-height:15.5px;font-weight:normal;color:#15428b;font-family:'Liberation Sans',sans-serif;transform:scale(0.9266,1.0);">View Filtered Table</div>
<div class="t" style="left:37.40px;top:679.58px;font-size:15.5px;line-height:15.5px;font-weight:normal;color:#15428b;font-family:'Liberation Sans',sans-serif;transform:scale(0.8950,1.0);">Action</div>
<div class="t" style="left:58.20px;top:707.48px;font-size:15.5px;line-height:15.5px;font-weight:normal;color:#2243a6;font-family:'Liberation Sans',sans-serif;transform:scale(0.9086,1.0);">Create SampleSet</div>
<div class="t" style="left:58.20px;top:730.88px;font-size:15.5px;line-height:15.5px;font-weight:normal;color:#2243a6;font-family:'Liberation Sans',sans-serif;transform:scale(0.8872,1.0);">Clear Selection</div>
<div class="t" style="left:57.30px;top:753.88px;font-size:15.5px;line-height:15.5px;font-weight:normal;color:#2243a6;font-family:'Liberation Sans',sans-serif;transform:scale(0.8970,1.0);">Filter Selection</div>
<div class="t" style="left:57.28px;top:776.38px;font-size:15.5px;line-height:15.5px;font-weight:normal;color:#2243a6;font-family:'Liberation Sans',sans-serif;transform:scale(0.9226,1.0);">Download Project</div>
<div class="t" style="left:411.50px;top:64.38px;font-size:15.5px;line-height:15.5px;font-weight:normal;color:#15428b;font-family:'Liberation Sans',sans-serif;transform:scale(0.8926,1.0);">Cell Cluster Distribution</div>
<div class="t" style="left:764.41px;top:94.24px;font-size:15px;line-height:15px;font-weight:normal;color:#000;font-family:'Liberation Serif',sans-serif;transform:scale(1.0857,1.0);">1*1</div>
<div class="t" style="left:873.91px;top:92.68px;font-size:15.5px;line-height:15.5px;font-weight:normal;color:#15428b;font-family:'Liberation Sans',sans-serif;transform:scale(0.8946,1.0);">1 Chart</div>
<div class="t" style="left:939.50px;top:92.68px;font-size:15.5px;line-height:15.5px;font-weight:normal;color:#15428b;font-family:'Liberation Sans',sans-serif;transform:scale(0.9612,1.0);">Auto Trellis</div>
<div class="t" style="left:1588.27px;top:64.78px;font-size:15.5px;line-height:15.5px;font-weight:normal;color:#15428b;font-family:'Liberation Sans',sans-serif;transform:scale(0.9281,1.0);">Legend</div>
<div class="t" style="left:1659.80px;top:64.78px;font-size:15.5px;line-height:15.5px;font-weight:normal;color:#fff;font-family:'Liberation Sans',sans-serif;transform:scale(0.9589,1.0);">Task</div>
<div class="t" style="left:1608.60px;top:93.08px;font-size:15.5px;line-height:15.5px;font-weight:normal;color:#15428b;font-family:'Liberation Sans',sans-serif;transform:scale(0.9346,1.0);">Copy Legend</div>
<div class="t" style="left:1707.30px;top:92.28px;font-size:15.5px;line-height:15.5px;font-weight:normal;color:#15428b;font-family:'Liberation Sans',sans-serif;transform:scale(0.9954,1.0);">without border</div>
<div class="t" style="left:1610.20px;top:119.48px;font-size:15.5px;line-height:15.5px;font-weight:normal;color:#000;font-family:'Liberation Sans',sans-serif;transform:scale(0.9567,1.0);">Color by ClusterCellType</div>
<div class="t" style="left:1652.40px;top:144.98px;font-size:15.5px;line-height:15.5px;font-weight:normal;color:#000;font-family:'Liberation Sans',sans-serif;transform:scale(0.8956,1.0);">acinar cell</div>
<div class="t" style="left:1652.40px;top:168.98px;font-size:15.5px;line-height:15.5px;font-weight:normal;color:#000;font-family:'Liberation Sans',sans-serif;transform:scale(0.9550,1.0);">activated T cell</div>
<div class="t" style="left:1652.40px;top:192.98px;font-size:15.5px;line-height:15.5px;font-weight:normal;color:#000;font-family:'Liberation Sans',sans-serif;transform:scale(0.9265,1.0);">adipocyte</div>
<div class="t" style="left:1652.40px;top:216.98px;font-size:15.5px;line-height:15.5px;font-weight:normal;color:#000;font-family:'Liberation Sans',sans-serif;transform:scale(0.9078,1.0);">adrenocortical cell</div>
<div class="t" style="left:1652.40px;top:240.98px;font-size:15.5px;line-height:15.5px;font-weight:normal;color:#000;font-family:'Liberation Sans',sans-serif;transform:scale(0.9360,1.0);">airway smooth muscle cell (AS...</div>
<div class="t" style="left:1652.40px;top:264.98px;font-size:15.5px;line-height:15.5px;font-weight:normal;color:#000;font-family:'Liberation Sans',sans-serif;transform:scale(0.9304,1.0);">alveolar bipotent progenitor cell</div>
<div class="t" style="left:1652.40px;top:288.98px;font-size:15.5px;line-height:15.5px;font-weight:normal;color:#000;font-family:'Liberation Sans',sans-serif;transform:scale(0.9231,1.0);">artery endothelial cell</div>
<div class="t" style="left:1652.40px;top:312.98px;font-size:15.5px;line-height:15.5px;font-weight:normal;color:#000;font-family:'Liberation Sans',sans-serif;transform:scale(0.9636,1.0);">astrocyte</div>
<div class="t" style="left:1652.40px;top:336.98px;font-size:15.5px;line-height:15.5px;font-weight:normal;color:#000;font-family:'Liberation Sans',sans-serif;transform:scale(0.9453,1.0);">atrial cardiac myocyte</div>
<div class="t" style="left:1651.48px;top:360.98px;font-size:15.5px;line-height:15.5px;font-weight:normal;color:#000;font-family:'Liberation Sans',sans-serif;transform:scale(0.9216,1.0);">B cell</div>
<div class="t" style="left:1651.50px;top:384.98px;font-size:15.5px;line-height:15.5px;font-weight:normal;color:#000;font-family:'Liberation Sans',sans-serif;transform:scale(0.8977,1.0);">basal epithelial cell</div>
<div class="t" style="left:1651.49px;top:408.98px;font-size:15.5px;line-height:15.5px;font-weight:normal;color:#000;font-family:'Liberation Sans',sans-serif;transform:scale(0.9111,1.0);">Bergmann glial cell</div>
<div class="t" style="left:1651.49px;top:432.98px;font-size:15.5px;line-height:15.5px;font-weight:normal;color:#000;font-family:'Liberation Sans',sans-serif;transform:scale(0.9122,1.0);">bladder urothelial cell</div>
<div class="t" style="left:1651.49px;top:456.98px;font-size:15.5px;line-height:15.5px;font-weight:normal;color:#000;font-family:'Liberation Sans',sans-serif;transform:scale(0.9145,1.0);">blood vessel endothelial cell</div>
<div class="t" style="left:1652.40px;top:480.98px;font-size:15.5px;line-height:15.5px;font-weight:normal;color:#000;font-family:'Liberation Sans',sans-serif;transform:scale(0.9023,1.0);">cardiac endothelial cell</div>
<div class="t" style="left:1652.40px;top:504.98px;font-size:15.5px;line-height:15.5px;font-weight:normal;color:#000;font-family:'Liberation Sans',sans-serif;transform:scale(0.9121,1.0);">cardiac fibroblast</div>
<div class="t" style="left:1652.40px;top:528.98px;font-size:15.5px;line-height:15.5px;font-weight:normal;color:#000;font-family:'Liberation Sans',sans-serif;transform:scale(0.9426,1.0);">cardiomyocyte</div>
<div class="t" style="left:1652.40px;top:552.98px;font-size:15.5px;line-height:15.5px;font-weight:normal;color:#000;font-family:'Liberation Sans',sans-serif;transform:scale(0.9649,1.0);">centrocyte</div>
<div class="t" style="left:1652.40px;top:576.98px;font-size:15.5px;line-height:15.5px;font-weight:normal;color:#000;font-family:'Liberation Sans',sans-serif;transform:scale(0.9143,1.0);">cholangiocyte</div>
<div class="t" style="left:1652.40px;top:600.98px;font-size:15.5px;line-height:15.5px;font-weight:normal;color:#000;font-family:'Liberation Sans',sans-serif;transform:scale(0.9413,1.0);">chondrocyte</div>
<div class="t" style="left:1652.40px;top:624.98px;font-size:15.5px;line-height:15.5px;font-weight:normal;color:#000;font-family:'Liberation Sans',sans-serif;transform:scale(0.9355,1.0);">chromaffin cell</div>
<div class="t" style="left:1652.40px;top:648.98px;font-size:15.5px;line-height:15.5px;font-weight:normal;color:#000;font-family:'Liberation Sans',sans-serif;transform:scale(0.8825,1.0);">ciliated epithelial cell</div>
<div class="t" style="left:1652.40px;top:672.98px;font-size:15.5px;line-height:15.5px;font-weight:normal;color:#000;font-family:'Liberation Sans',sans-serif;transform:scale(0.8838,1.0);">club cell</div>
<div class="t" style="left:1652.40px;top:696.98px;font-size:15.5px;line-height:15.5px;font-weight:normal;color:#000;font-family:'Liberation Sans',sans-serif;transform:scale(0.8985,1.0);">colon endothelial cell</div>
<div class="t" style="left:1652.40px;top:720.98px;font-size:15.5px;line-height:15.5px;font-weight:normal;color:#000;font-family:'Liberation Sans',sans-serif;transform:scale(0.9156,1.0);">conventional dendritic cell</div>
<div class="t" style="left:1652.40px;top:744.98px;font-size:15.5px;line-height:15.5px;font-weight:normal;color:#000;font-family:'Liberation Sans',sans-serif;transform:scale(0.9586,1.0);">cytotoxic T cell</div>
<div class="t" style="left:1652.40px;top:768.98px;font-size:15.5px;line-height:15.5px;font-weight:normal;color:#000;font-family:'Liberation Sans',sans-serif;transform:scale(0.9400,1.0);">cytotrophoblast cell</div>
<div class="t" style="left:1652.40px;top:792.98px;font-size:15.5px;line-height:15.5px;font-weight:normal;color:#000;font-family:'Liberation Sans',sans-serif;transform:scale(0.9113,1.0);">dendritic cell (DC)</div>
<div class="t" style="left:1652.40px;top:816.98px;font-size:15.5px;line-height:15.5px;font-weight:normal;color:#000;font-family:'Liberation Sans',sans-serif;transform:scale(0.9222,1.0);">dermal fibroblast</div>
<div class="t" style="left:1652.40px;top:840.98px;font-size:15.5px;line-height:15.5px;font-weight:normal;color:#000;font-family:'Liberation Sans',sans-serif;transform:scale(0.9264,1.0);">distal convoluted tubule cell</div>
<div class="t" style="left:1652.40px;top:864.98px;font-size:15.5px;line-height:15.5px;font-weight:normal;color:#000;font-family:'Liberation Sans',sans-serif;transform:scale(0.9357,1.0);">distal convoluted tubule progenit...</div>
<div class="t" style="left:1652.40px;top:888.98px;font-size:15.5px;line-height:15.5px;font-weight:normal;color:#000;font-family:'Liberation Sans',sans-serif;transform:scale(1.0248,1.0);">effector T cell</div>
<div class="t" style="left:608.80px;top:180.64px;font-size:12px;line-height:12px;font-weight:normal;color:#000;font-family:'Liberation Sans',sans-serif;">skin</div>
<div class="t" style="left:545.80px;top:217.81px;font-size:12px;line-height:12px;font-weight:normal;color:#000;font-family:'Liberation Sans',sans-serif;transform:scale(1.0041,1.0);">sensory system</div>
<div class="t" style="left:530.70px;top:254.97px;font-size:12px;line-height:12px;font-weight:normal;color:#000;font-family:'Liberation Sans',sans-serif;transform:scale(1.0079,1.0);">respiratory system</div>
<div class="t" style="left:579.50px;top:292.14px;font-size:12px;line-height:12px;font-weight:normal;color:#000;font-family:'Liberation Sans',sans-serif;transform:scale(1.0129,1.0);">pancreas</div>
<div class="t" style="left:591.50px;top:329.30px;font-size:12px;line-height:12px;font-weight:normal;color:#000;font-family:'Liberation Sans',sans-serif;transform:scale(0.9912,1.0);">muscle</div>
<div class="t" style="left:490.20px;top:366.47px;font-size:12px;line-height:12px;font-weight:normal;color:#000;font-family:'Liberation Sans',sans-serif;transform:scale(1.0189,1.0);">male reproductive system</div>
<div class="t" style="left:607.70px;top:403.63px;font-size:12px;line-height:12px;font-weight:normal;color:#000;font-family:'Liberation Sans',sans-serif;transform:scale(0.9906,1.0);">liver</div>
<div class="t" style="left:435.00px;top:440.80px;font-size:12px;line-height:12px;font-weight:normal;color:#000;font-family:'Liberation Sans',sans-serif;transform:scale(1.0196,1.0);">hematopoietic and lymphoid system</div>
<div class="t" style="left:602.80px;top:477.96px;font-size:12px;line-height:12px;font-weight:normal;color:#000;font-family:'Liberation Sans',sans-serif;transform:scale(0.9530,1.0);">heart</div>
<div class="t" style="left:600.90px;top:515.13px;font-size:12px;line-height:12px;font-weight:normal;color:#000;font-family:'Liberation Sans',sans-serif;transform:scale(0.9969,1.0);">gland</div>
<div class="t" style="left:505.60px;top:552.29px;font-size:12px;line-height:12px;font-weight:normal;color:#000;font-family:'Liberation Sans',sans-serif;transform:scale(1.0151,1.0);">gastrointestinal system</div>
<div class="t" style="left:480.10px;top:589.46px;font-size:12px;line-height:12px;font-weight:normal;color:#000;font-family:'Liberation Sans',sans-serif;transform:scale(1.0182,1.0);">female reproductive system</div>
<div class="t" style="left:574.70px;top:626.62px;font-size:12px;line-height:12px;font-weight:normal;color:#000;font-family:'Liberation Sans',sans-serif;transform:scale(1.0142,1.0);">epityphlon</div>
<div class="t" style="left:589.70px;top:663.79px;font-size:12px;line-height:12px;font-weight:normal;color:#000;font-family:'Liberation Sans',sans-serif;transform:scale(0.9866,1.0);">embryo</div>
<div class="t" style="left:536.40px;top:700.95px;font-size:12px;line-height:12px;font-weight:normal;color:#000;font-family:'Liberation Sans',sans-serif;transform:scale(1.0078,1.0);">connective tissue</div>
<div class="t" style="left:504.50px;top:738.12px;font-size:12px;line-height:12px;font-weight:normal;color:#000;font-family:'Liberation Sans',sans-serif;transform:scale(1.0131,1.0);">central nervous system</div>
<div class="t" style="left:561.50px;top:775.28px;font-size:12px;line-height:12px;font-weight:normal;color:#000;font-family:'Liberation Sans',sans-serif;transform:scale(1.0296,1.0);">blood vessel</div>
<div class="t" style="left:541.20px;top:812.45px;font-size:12px;line-height:12px;font-weight:normal;color:#000;font-family:'Liberation Sans',sans-serif;transform:scale(1.0261,1.0);">ascending colon</div>
<div class="t" style="left:1041.20px;top:133.85px;font-size:14px;line-height:14px;font-weight:normal;color:#000;font-family:'Liberation Sans',sans-serif;transform:scale(1.0213,1.0);">TissueCategory</div>
<div class="t" style="left:638.36px;top:864.64px;font-size:12px;line-height:12px;font-weight:normal;color:#000;font-family:'Liberation Sans',sans-serif;transform:scale(1.0700,1.0);">0</div>
<div class="t" style="left:759.48px;top:864.64px;font-size:12px;line-height:12px;font-weight:normal;color:#000;font-family:'Liberation Sans',sans-serif;transform:scale(1.0700,1.0);">200</div>
<div class="t" style="left:887.75px;top:864.64px;font-size:12px;line-height:12px;font-weight:normal;color:#000;font-family:'Liberation Sans',sans-serif;transform:scale(1.0700,1.0);">400</div>
<div class="t" style="left:1016.02px;top:864.64px;font-size:12px;line-height:12px;font-weight:normal;color:#000;font-family:'Liberation Sans',sans-serif;transform:scale(1.0700,1.0);">600</div>
<div class="t" style="left:1144.29px;top:864.64px;font-size:12px;line-height:12px;font-weight:normal;color:#000;font-family:'Liberation Sans',sans-serif;transform:scale(1.0700,1.0);">800</div>
<div class="t" style="left:1268.99px;top:864.64px;font-size:12px;line-height:12px;font-weight:normal;color:#000;font-family:'Liberation Sans',sans-serif;transform:scale(1.0700,1.0);">1000</div>
<div class="t" style="left:1397.26px;top:864.64px;font-size:12px;line-height:12px;font-weight:normal;color:#000;font-family:'Liberation Sans',sans-serif;transform:scale(1.0700,1.0);">1200</div>
<div class="t" style="left:1525.53px;top:864.64px;font-size:12px;line-height:12px;font-weight:normal;color:#000;font-family:'Liberation Sans',sans-serif;transform:scale(1.0700,1.0);">1400</div>
<div class="a" style="left:1575px;top:896px;width:328px;height:6px;background:#e1ecfc"></div>
<div class="a" style="left:0;top:56px;width:146px;height:1px;background:#9ebde8"></div>
<div class="a" style="left:304px;top:56px;width:1599px;height:1px;background:#9ebde8"></div>
<div class="a" style="left:0;top:902px;width:1903px;height:1px;background:#a3c2ea"></div>
<div class="a" style="left:0;top:903px;width:1903px;height:2px;background:#cddcf0"></div>
<svg style="left:0;top:0" width="1903" height="905" viewBox="0 0 1903 905" shape-rendering="crispEdges">
<defs><clipPath id="plot"><rect x="642.9" y="155" width="897" height="698"/></clipPath></defs>
<line x1="770.5" y1="155" x2="770.5" y2="853" stroke="#f2f2f2" stroke-width="1"/>
<line x1="898.5" y1="155" x2="898.5" y2="853" stroke="#f2f2f2" stroke-width="1"/>
<line x1="1027.5" y1="155" x2="1027.5" y2="853" stroke="#f2f2f2" stroke-width="1"/>
<line x1="1155.5" y1="155" x2="1155.5" y2="853" stroke="#f2f2f2" stroke-width="1"/>
<line x1="1283.5" y1="155" x2="1283.5" y2="853" stroke="#f2f2f2" stroke-width="1"/>
<line x1="1412.5" y1="155" x2="1412.5" y2="853" stroke="#f2f2f2" stroke-width="1"/>
<line x1="1540.5" y1="155" x2="1540.5" y2="853" stroke="#f2f2f2" stroke-width="1"/>
<line x1="643" y1="187.5" x2="1540" y2="187.5" stroke="#f2f2f2" stroke-width="1"/>
<line x1="637" y1="187.5" x2="642" y2="187.5" stroke="#d0d0d0" stroke-width="1"/>
<line x1="643" y1="224.5" x2="1540" y2="224.5" stroke="#f2f2f2" stroke-width="1"/>
<line x1="637" y1="224.5" x2="642" y2="224.5" stroke="#d0d0d0" stroke-width="1"/>
<line x1="643" y1="261.5" x2="1540" y2="261.5" stroke="#f2f2f2" stroke-width="1"/>
<line x1="637" y1="261.5" x2="642" y2="261.5" stroke="#d0d0d0" stroke-width="1"/>
<line x1="643" y1="298.5" x2="1540" y2="298.5" stroke="#f2f2f2" stroke-width="1"/>
<line x1="637" y1="298.5" x2="642" y2="298.5" stroke="#d0d0d0" stroke-width="1"/>
<line x1="643" y1="336.5" x2="1540" y2="336.5" stroke="#f2f2f2" stroke-width="1"/>
<line x1="637" y1="336.5" x2="642" y2="336.5" stroke="#d0d0d0" stroke-width="1"/>
<line x1="643" y1="373.5" x2="1540" y2="373.5" stroke="#f2f2f2" stroke-width="1"/>
<line x1="637" y1="373.5" x2="642" y2="373.5" stroke="#d0d0d0" stroke-width="1"/>
<line x1="643" y1="410.5" x2="1540" y2="410.5" stroke="#f2f2f2" stroke-width="1"/>
<line x1="637" y1="410.5" x2="642" y2="410.5" stroke="#d0d0d0" stroke-width="1"/>
<line x1="643" y1="447.5" x2="1540" y2="447.5" stroke="#f2f2f2" stroke-width="1"/>
<line x1="637" y1="447.5" x2="642" y2="447.5" stroke="#d0d0d0" stroke-width="1"/>
<line x1="643" y1="484.5" x2="1540" y2="484.5" stroke="#f2f2f2" stroke-width="1"/>
<line x1="637" y1="484.5" x2="642" y2="484.5" stroke="#d0d0d0" stroke-width="1"/>
<line x1="643" y1="521.5" x2="1540" y2="521.5" stroke="#f2f2f2" stroke-width="1"/>
<line x1="637" y1="521.5" x2="642" y2="521.5" stroke="#d0d0d0" stroke-width="1"/>
<line x1="643" y1="559.5" x2="1540" y2="559.5" stroke="#f2f2f2" stroke-width="1"/>
<line x1="637" y1="559.5" x2="642" y2="559.5" stroke="#d0d0d0" stroke-width="1"/>
<line x1="643" y1="596.5" x2="1540" y2="596.5" stroke="#f2f2f2" stroke-width="1"/>
<line x1="637" y1="596.5" x2="642" y2="596.5" stroke="#d0d0d0" stroke-width="1"/>
<line x1="643" y1="633.5" x2="1540" y2="633.5" stroke="#f2f2f2" stroke-width="1"/>
<line x1="637" y1="633.5" x2="642" y2="633.5" stroke="#d0d0d0" stroke-width="1"/>
<line x1="643" y1="670.5" x2="1540" y2="670.5" stroke="#f2f2f2" stroke-width="1"/>
<line x1="637" y1="670.5" x2="642" y2="670.5" stroke="#d0d0d0" stroke-width="1"/>
<line x1="643" y1="707.5" x2="1540" y2="707.5" stroke="#f2f2f2" stroke-width="1"/>
<line x1="637" y1="707.5" x2="642" y2="707.5" stroke="#d0d0d0" stroke-width="1"/>
<line x1="643" y1="744.5" x2="1540" y2="744.5" stroke="#f2f2f2" stroke-width="1"/>
<line x1="637" y1="744.5" x2="642" y2="744.5" stroke="#d0d0d0" stroke-width="1"/>
<line x1="643" y1="782.5" x2="1540" y2="782.5" stroke="#f2f2f2" stroke-width="1"/>
<line x1="637" y1="782.5" x2="642" y2="782.5" stroke="#d0d0d0" stroke-width="1"/>
<line x1="643" y1="819.5" x2="1540" y2="819.5" stroke="#f2f2f2" stroke-width="1"/>
<line x1="637" y1="819.5" x2="642" y2="819.5" stroke="#d0d0d0" stroke-width="1"/>
<g clip-path="url(#plot)">
<clipPath id="b0"><path d="M642.9 140.7H667.0Q669.0 140.7 669.0 142.7V157.7Q669.0 159.7 667.0 159.7H642.9Z"/></clipPath>
<g clip-path="url(#b0)">
<rect x="642.9" y="140.7" width="1.2" height="19" fill="#ffa500"/>
<rect x="644.1" y="140.7" width="8.4" height="19" fill="#96522f"/>
<rect x="652.5" y="140.7" width="1.4" height="19" fill="#b0736a"/>
<rect x="653.9" y="140.7" width="4.1" height="19" fill="#008080"/>
<rect x="658.0" y="140.7" width="2.3" height="19" fill="#6035a0"/>
<rect x="660.3" y="140.7" width="5.0" height="19" fill="#c71585"/>
<rect x="665.3" y="140.7" width="1.5" height="19" fill="#125043"/>
<rect x="666.8" y="140.7" width="2.2" height="19" fill="#4a908a"/>
</g>
<clipPath id="b1"><path d="M642.9 177.9H681.0Q683.0 177.9 683.0 179.9V194.9Q683.0 196.9 681.0 196.9H642.9Z"/></clipPath>
<g clip-path="url(#b1)">
<rect x="642.9" y="177.9" width="4.2" height="19" fill="#8a2be2"/>
<rect x="647.1" y="177.9" width="1.2" height="19" fill="#ff4500"/>
<rect x="648.3" y="177.9" width="5.7" height="19" fill="#07698f"/>
<rect x="654.0" y="177.9" width="5.8" height="19" fill="#b0736a"/>
<rect x="659.8" y="177.9" width="1.2" height="19" fill="#a020c0"/>
<rect x="661.0" y="177.9" width="2.0" height="19" fill="#96522f"/>
<rect x="663.0" y="177.9" width="2.0" height="19" fill="#5f8e5a"/>
<rect x="665.0" y="177.9" width="5.5" height="19" fill="#7b5560"/>
<rect x="670.5" y="177.9" width="1.3" height="19" fill="#8a2be2"/>
<rect x="671.8" y="177.9" width="4.2" height="19" fill="#adff2f"/>
<rect x="676.0" y="177.9" width="3.7" height="19" fill="#006400"/>
<rect x="679.7" y="177.9" width="3.3" height="19" fill="#1e90ff"/>
</g>
<clipPath id="b2"><path d="M642.9 215.1H663.0Q665.0 215.1 665.0 217.1V232.1Q665.0 234.1 663.0 234.1H642.9Z"/></clipPath>
<g clip-path="url(#b2)">
<rect x="642.9" y="215.1" width="4.1" height="19" fill="#07698f"/>
<rect x="647.0" y="215.1" width="1.0" height="19" fill="#ff4500"/>
<rect x="648.0" y="215.1" width="2.8" height="19" fill="#008080"/>
<rect x="650.8" y="215.1" width="1.2" height="19" fill="#9acd32"/>
<rect x="652.0" y="215.1" width="4.0" height="19" fill="#8a2a68"/>
<rect x="656.0" y="215.1" width="2.0" height="19" fill="#6035a0"/>
<rect x="658.0" y="215.1" width="3.0" height="19" fill="#125043"/>
<rect x="661.0" y="215.1" width="2.5" height="19" fill="#1e90ff"/>
<rect x="663.5" y="215.1" width="1.5" height="19" fill="#008080"/>
</g>
<clipPath id="b3"><path d="M642.9 252.2H826.0Q828.0 252.2 828.0 254.2V269.2Q828.0 271.2 826.0 271.2H642.9Z"/></clipPath>
<g clip-path="url(#b3)">
<rect x="642.9" y="252.2" width="1.0" height="19" fill="#32cd32"/>
<rect x="643.9" y="252.2" width="2.9" height="19" fill="#000080"/>
<rect x="646.8" y="252.2" width="2.1" height="19" fill="#ffa500"/>
<rect x="648.9" y="252.2" width="3.2" height="19" fill="#f0e68c"/>
<rect x="652.1" y="252.2" width="0.8" height="19" fill="#808080"/>
<rect x="652.9" y="252.2" width="5.0" height="19" fill="#808000"/>
<rect x="657.9" y="252.2" width="4.1" height="19" fill="#9acd32"/>
<rect x="662.0" y="252.2" width="6.6" height="19" fill="#c71585"/>
<rect x="668.6" y="252.2" width="2.4" height="19" fill="#ffc0cb"/>
<rect x="671.0" y="252.2" width="0.8" height="19" fill="#006050"/>
<rect x="671.8" y="252.2" width="3.3" height="19" fill="#008b8b"/>
<rect x="675.1" y="252.2" width="2.7" height="19" fill="#ad4a14"/>
<rect x="677.8" y="252.2" width="5.3" height="19" fill="#3c4bab"/>
<rect x="683.1" y="252.2" width="1.0" height="19" fill="#07698f"/>
<rect x="684.1" y="252.2" width="4.8" height="19" fill="#b0736a"/>
<rect x="688.9" y="252.2" width="9.2" height="19" fill="#7b109b"/>
<rect x="698.1" y="252.2" width="2.9" height="19" fill="#008080"/>
<rect x="701.0" y="252.2" width="13.9" height="19" fill="#6a9fa8"/>
<rect x="714.9" y="252.2" width="5.2" height="19" fill="#23973a"/>
<rect x="720.1" y="252.2" width="3.2" height="19" fill="#6a3050"/>
<rect x="723.3" y="252.2" width="1.6" height="19" fill="#2a0a1a"/>
<rect x="724.9" y="252.2" width="1.0" height="19" fill="#8a2be2"/>
<rect x="725.9" y="252.2" width="3.2" height="19" fill="#96522f"/>
<rect x="729.1" y="252.2" width="12.7" height="19" fill="#8a2a68"/>
<rect x="741.8" y="252.2" width="4.0" height="19" fill="#5f8e5a"/>
<rect x="745.8" y="252.2" width="1.3" height="19" fill="#3c4bab"/>
<rect x="747.1" y="252.2" width="3.7" height="19" fill="#0aba20"/>
<rect x="750.8" y="252.2" width="1.0" height="19" fill="#125043"/>
<rect x="751.8" y="252.2" width="2.9" height="19" fill="#4a908a"/>
<rect x="754.7" y="252.2" width="1.3" height="19" fill="#40e0d0"/>
<rect x="756.0" y="252.2" width="1.3" height="19" fill="#ffa500"/>
<rect x="757.3" y="252.2" width="2.4" height="19" fill="#f0e68c"/>
<rect x="759.7" y="252.2" width="1.3" height="19" fill="#708090"/>
<rect x="761.0" y="252.2" width="10.0" height="19" fill="#adff2f"/>
<rect x="771.0" y="252.2" width="4.1" height="19" fill="#ee82ee"/>
<rect x="775.1" y="252.2" width="2.7" height="19" fill="#9acd32"/>
<rect x="777.8" y="252.2" width="6.3" height="19" fill="#c71585"/>
<rect x="784.1" y="252.2" width="2.7" height="19" fill="#8a2be2"/>
<rect x="786.8" y="252.2" width="4.9" height="19" fill="#708090"/>
<rect x="791.7" y="252.2" width="10.6" height="19" fill="#363880"/>
<rect x="802.3" y="252.2" width="2.3" height="19" fill="#125043"/>
<rect x="804.6" y="252.2" width="7.4" height="19" fill="#4a908a"/>
<rect x="812.0" y="252.2" width="4.2" height="19" fill="#7b109b"/>
<rect x="816.2" y="252.2" width="3.9" height="19" fill="#07698f"/>
<rect x="820.1" y="252.2" width="7.9" height="19" fill="#1e90ff"/>
</g>
<clipPath id="b4"><path d="M642.9 289.4H731.9Q733.9 289.4 733.9 291.4V306.4Q733.9 308.4 731.9 308.4H642.9Z"/></clipPath>
<g clip-path="url(#b4)">
<rect x="642.9" y="289.4" width="7.9" height="19" fill="#1e90ff"/>
<rect x="650.8" y="289.4" width="0.8" height="19" fill="#f0e68c"/>
<rect x="651.6" y="289.4" width="1.4" height="19" fill="#4b0082"/>
<rect x="653.0" y="289.4" width="3.0" height="19" fill="#a9a9a9"/>
<rect x="656.0" y="289.4" width="0.8" height="19" fill="#556b2f"/>
<rect x="656.8" y="289.4" width="6.3" height="19" fill="#008b8b"/>
<rect x="663.1" y="289.4" width="2.9" height="19" fill="#6a3050"/>
<rect x="666.0" y="289.4" width="7.9" height="19" fill="#ad4a14"/>
<rect x="673.9" y="289.4" width="5.1" height="19" fill="#07698f"/>
<rect x="679.0" y="289.4" width="2.1" height="19" fill="#b890a0"/>
<rect x="681.1" y="289.4" width="7.0" height="19" fill="#b0736a"/>
<rect x="688.1" y="289.4" width="2.0" height="19" fill="#07698f"/>
<rect x="690.1" y="289.4" width="1.9" height="19" fill="#006400"/>
<rect x="692.0" y="289.4" width="2.1" height="19" fill="#a020c0"/>
<rect x="694.1" y="289.4" width="2.0" height="19" fill="#708090"/>
<rect x="696.1" y="289.4" width="1.9" height="19" fill="#96522f"/>
<rect x="698.0" y="289.4" width="3.3" height="19" fill="#8a2a68"/>
<rect x="701.3" y="289.4" width="0.6" height="19" fill="#5f8e5a"/>
<rect x="701.9" y="289.4" width="1.3" height="19" fill="#1e90ff"/>
<rect x="703.2" y="289.4" width="3.6" height="19" fill="#808080"/>
<rect x="706.8" y="289.4" width="4.3" height="19" fill="#adff2f"/>
<rect x="711.1" y="289.4" width="2.2" height="19" fill="#ee82ee"/>
<rect x="713.3" y="289.4" width="1.7" height="19" fill="#a9a9a9"/>
<rect x="715.0" y="289.4" width="1.0" height="19" fill="#90ee90"/>
<rect x="716.0" y="289.4" width="3.2" height="19" fill="#808000"/>
<rect x="719.2" y="289.4" width="6.2" height="19" fill="#363880"/>
<rect x="725.4" y="289.4" width="0.6" height="19" fill="#125043"/>
<rect x="726.0" y="289.4" width="3.0" height="19" fill="#4a908a"/>
<rect x="729.0" y="289.4" width="4.9" height="19" fill="#1e90ff"/>
</g>
<clipPath id="b5"><path d="M642.9 326.6H669.0Q671.0 326.6 671.0 328.6V343.6Q671.0 345.6 669.0 345.6H642.9Z"/></clipPath>
<g clip-path="url(#b5)">
<rect x="642.9" y="326.6" width="1.0" height="19" fill="#ba55d3"/>
<rect x="643.9" y="326.6" width="3.1" height="19" fill="#ffc0cb"/>
<rect x="647.0" y="326.6" width="2.1" height="19" fill="#ad4a14"/>
<rect x="649.1" y="326.6" width="2.0" height="19" fill="#8b4513"/>
<rect x="651.1" y="326.6" width="2.9" height="19" fill="#b0736a"/>
<rect x="654.0" y="326.6" width="2.0" height="19" fill="#96522f"/>
<rect x="656.0" y="326.6" width="1.1" height="19" fill="#5f8e5a"/>
<rect x="657.1" y="326.6" width="2.8" height="19" fill="#ba55d3"/>
<rect x="659.9" y="326.6" width="1.3" height="19" fill="#adff2f"/>
<rect x="661.2" y="326.6" width="1.9" height="19" fill="#c71585"/>
<rect x="663.1" y="326.6" width="2.0" height="19" fill="#5f8e5a"/>
<rect x="665.1" y="326.6" width="4.6" height="19" fill="#125043"/>
<rect x="669.7" y="326.6" width="0.5" height="19" fill="#4a908a"/>
<rect x="670.1" y="326.6" width="0.9" height="19" fill="#1e90ff"/>
</g>
<clipPath id="b6"><path d="M642.9 363.7H660.0Q662.0 363.7 662.0 365.7V380.7Q662.0 382.7 660.0 382.7H642.9Z"/></clipPath>
<g clip-path="url(#b6)">
<rect x="642.9" y="363.7" width="1.1" height="19" fill="#adff2f"/>
<rect x="644.0" y="363.7" width="1.0" height="19" fill="#ff4500"/>
<rect x="645.0" y="363.7" width="6.3" height="19" fill="#3c4bab"/>
<rect x="651.3" y="363.7" width="1.0" height="19" fill="#b890a0"/>
<rect x="652.3" y="363.7" width="0.8" height="19" fill="#90ee90"/>
<rect x="653.1" y="363.7" width="2.8" height="19" fill="#008080"/>
<rect x="655.9" y="363.7" width="1.0" height="19" fill="#adff2f"/>
<rect x="656.9" y="363.7" width="1.1" height="19" fill="#ff4500"/>
<rect x="658.0" y="363.7" width="1.9" height="19" fill="#363880"/>
<rect x="659.9" y="363.7" width="1.2" height="19" fill="#4a908a"/>
<rect x="661.1" y="363.7" width="0.9" height="19" fill="#1e90ff"/>
</g>
<clipPath id="b7"><path d="M642.9 400.9H733.0Q735.0 400.9 735.0 402.9V417.9Q735.0 419.9 733.0 419.9H642.9Z"/></clipPath>
<g clip-path="url(#b7)">
<rect x="642.9" y="400.9" width="4.1" height="19" fill="#32cd32"/>
<rect x="647.0" y="400.9" width="4.1" height="19" fill="#4b0082"/>
<rect x="651.1" y="400.9" width="0.7" height="19" fill="#a9a9a9"/>
<rect x="651.8" y="400.9" width="4.1" height="19" fill="#ffc0cb"/>
<rect x="655.9" y="400.9" width="4.3" height="19" fill="#008080"/>
<rect x="660.2" y="400.9" width="5.7" height="19" fill="#3c4bab"/>
<rect x="665.9" y="400.9" width="2.9" height="19" fill="#07698f"/>
<rect x="668.8" y="400.9" width="2.0" height="19" fill="#0aba20"/>
<rect x="670.8" y="400.9" width="1.4" height="19" fill="#96522f"/>
<rect x="672.2" y="400.9" width="7.9" height="19" fill="#4b0082"/>
<rect x="680.1" y="400.9" width="8.0" height="19" fill="#7fffd4"/>
<rect x="688.1" y="400.9" width="4.9" height="19" fill="#0a0a96"/>
<rect x="693.0" y="400.9" width="3.0" height="19" fill="#5f8e5a"/>
<rect x="696.0" y="400.9" width="1.0" height="19" fill="#363880"/>
<rect x="697.0" y="400.9" width="1.7" height="19" fill="#2aa080"/>
<rect x="698.7" y="400.9" width="2.3" height="19" fill="#1e90ff"/>
<rect x="701.0" y="400.9" width="3.0" height="19" fill="#40e0d0"/>
<rect x="704.0" y="400.9" width="14.9" height="19" fill="#adff2f"/>
<rect x="718.9" y="400.9" width="9.0" height="19" fill="#c71585"/>
<rect x="727.9" y="400.9" width="1.0" height="19" fill="#5f8e5a"/>
<rect x="728.9" y="400.9" width="1.3" height="19" fill="#363880"/>
<rect x="730.2" y="400.9" width="0.7" height="19" fill="#4a908a"/>
<rect x="730.9" y="400.9" width="4.1" height="19" fill="#1e90ff"/>
</g>
<clipPath id="b8"><path d="M642.9 438.1H843.9Q845.9 438.1 845.9 440.1V455.1Q845.9 457.1 843.9 457.1H642.9Z"/></clipPath>
<g clip-path="url(#b8)">
<rect x="642.9" y="438.1" width="4.2" height="19" fill="#32cd32"/>
<rect x="647.1" y="438.1" width="6.8" height="19" fill="#808080"/>
<rect x="653.9" y="438.1" width="7.0" height="19" fill="#a9a9a9"/>
<rect x="660.9" y="438.1" width="4.1" height="19" fill="#ffc0cb"/>
<rect x="665.0" y="438.1" width="4.9" height="19" fill="#556b2f"/>
<rect x="669.9" y="438.1" width="14.0" height="19" fill="#008b8b"/>
<rect x="683.9" y="438.1" width="1.2" height="19" fill="#ad4a14"/>
<rect x="685.1" y="438.1" width="2.9" height="19" fill="#006050"/>
<rect x="688.0" y="438.1" width="13.8" height="19" fill="#07698f"/>
<rect x="701.8" y="438.1" width="2.2" height="19" fill="#0aba20"/>
<rect x="704.0" y="438.1" width="2.9" height="19" fill="#125043"/>
<rect x="706.9" y="438.1" width="1.2" height="19" fill="#ee82ee"/>
<rect x="708.1" y="438.1" width="7.0" height="19" fill="#8b4513"/>
<rect x="715.1" y="438.1" width="1.1" height="19" fill="#ad4a14"/>
<rect x="716.2" y="438.1" width="3.9" height="19" fill="#96522f"/>
<rect x="720.1" y="438.1" width="4.9" height="19" fill="#8a2a68"/>
<rect x="725.0" y="438.1" width="1.0" height="19" fill="#5f8e5a"/>
<rect x="726.0" y="438.1" width="3.0" height="19" fill="#3c4bab"/>
<rect x="729.0" y="438.1" width="19.2" height="19" fill="#4a908a"/>
<rect x="748.2" y="438.1" width="2.6" height="19" fill="#000080"/>
<rect x="750.8" y="438.1" width="47.3" height="19" fill="#adff2f"/>
<rect x="798.1" y="438.1" width="6.4" height="19" fill="#ee82ee"/>
<rect x="804.5" y="438.1" width="12.5" height="19" fill="#c71585"/>
<rect x="817.0" y="438.1" width="5.5" height="19" fill="#ffa500"/>
<rect x="822.5" y="438.1" width="1.1" height="19" fill="#125043"/>
<rect x="823.6" y="438.1" width="19.4" height="19" fill="#4a908a"/>
<rect x="843.0" y="438.1" width="2.9" height="19" fill="#1e90ff"/>
</g>
<clipPath id="b9"><path d="M642.9 475.2H721.8Q723.8 475.2 723.8 477.2V492.2Q723.8 494.2 721.8 494.2H642.9Z"/></clipPath>
<g clip-path="url(#b9)">
<rect x="642.9" y="475.2" width="2.1" height="19" fill="#f0e68c"/>
<rect x="645.0" y="475.2" width="5.6" height="19" fill="#008080"/>
<rect x="650.6" y="475.2" width="1.3" height="19" fill="#4b0082"/>
<rect x="651.9" y="475.2" width="6.0" height="19" fill="#006400"/>
<rect x="657.9" y="475.2" width="4.0" height="19" fill="#32cd32"/>
<rect x="661.9" y="475.2" width="3.0" height="19" fill="#ffc0cb"/>
<rect x="664.9" y="475.2" width="0.9" height="19" fill="#008080"/>
<rect x="665.8" y="475.2" width="3.0" height="19" fill="#23973a"/>
<rect x="668.8" y="475.2" width="3.3" height="19" fill="#3c4bab"/>
<rect x="672.1" y="475.2" width="3.0" height="19" fill="#07698f"/>
<rect x="675.1" y="475.2" width="5.0" height="19" fill="#b0736a"/>
<rect x="680.1" y="475.2" width="1.0" height="19" fill="#708090"/>
<rect x="681.1" y="475.2" width="3.0" height="19" fill="#96522f"/>
<rect x="684.1" y="475.2" width="5.9" height="19" fill="#8a2a68"/>
<rect x="690.0" y="475.2" width="2.0" height="19" fill="#5f8e5a"/>
<rect x="692.0" y="475.2" width="1.0" height="19" fill="#3c4bab"/>
<rect x="693.0" y="475.2" width="2.7" height="19" fill="#808080"/>
<rect x="695.7" y="475.2" width="5.3" height="19" fill="#adff2f"/>
<rect x="701.0" y="475.2" width="3.0" height="19" fill="#363880"/>
<rect x="704.0" y="475.2" width="2.0" height="19" fill="#125043"/>
<rect x="706.0" y="475.2" width="2.0" height="19" fill="#4a908a"/>
<rect x="708.0" y="475.2" width="6.9" height="19" fill="#1e90ff"/>
<rect x="714.9" y="475.2" width="2.3" height="19" fill="#800000"/>
<rect x="717.2" y="475.2" width="6.6" height="19" fill="#808080"/>
</g>
<clipPath id="b10"><path d="M642.9 512.4H815.0Q817.0 512.4 817.0 514.4V529.4Q817.0 531.4 815.0 531.4H642.9Z"/></clipPath>
<g clip-path="url(#b10)">
<rect x="642.9" y="512.4" width="5.4" height="19" fill="#40e0d0"/>
<rect x="648.3" y="512.4" width="2.6" height="19" fill="#4b0082"/>
<rect x="650.9" y="512.4" width="3.0" height="19" fill="#8b0000"/>
<rect x="653.9" y="512.4" width="6.0" height="19" fill="#ffc0cb"/>
<rect x="659.9" y="512.4" width="1.0" height="19" fill="#006050"/>
<rect x="660.9" y="512.4" width="4.0" height="19" fill="#008b8b"/>
<rect x="664.9" y="512.4" width="15.2" height="19" fill="#ad4a14"/>
<rect x="680.1" y="512.4" width="6.9" height="19" fill="#3c4bab"/>
<rect x="687.0" y="512.4" width="6.0" height="19" fill="#07698f"/>
<rect x="693.0" y="512.4" width="13.9" height="19" fill="#584a82"/>
<rect x="706.9" y="512.4" width="7.3" height="19" fill="#b0736a"/>
<rect x="714.2" y="512.4" width="2.7" height="19" fill="#006400"/>
<rect x="716.9" y="512.4" width="6.9" height="19" fill="#8b0000"/>
<rect x="723.8" y="512.4" width="5.1" height="19" fill="#9acd32"/>
<rect x="728.9" y="512.4" width="1.9" height="19" fill="#8a2be2"/>
<rect x="730.8" y="512.4" width="2.1" height="19" fill="#584a82"/>
<rect x="732.9" y="512.4" width="0.8" height="19" fill="#96522f"/>
<rect x="733.7" y="512.4" width="10.2" height="19" fill="#8a2a68"/>
<rect x="743.9" y="512.4" width="2.6" height="19" fill="#2aa080"/>
<rect x="746.5" y="512.4" width="1.4" height="19" fill="#40e0d0"/>
<rect x="747.9" y="512.4" width="3.1" height="19" fill="#008080"/>
<rect x="751.0" y="512.4" width="3.7" height="19" fill="#808080"/>
<rect x="754.7" y="512.4" width="14.4" height="19" fill="#adff2f"/>
<rect x="769.1" y="512.4" width="0.8" height="19" fill="#ee82ee"/>
<rect x="769.9" y="512.4" width="3.7" height="19" fill="#c71585"/>
<rect x="773.6" y="512.4" width="1.6" height="19" fill="#ffa500"/>
<rect x="775.2" y="512.4" width="11.8" height="19" fill="#363880"/>
<rect x="787.0" y="512.4" width="9.7" height="19" fill="#125043"/>
<rect x="796.7" y="512.4" width="8.2" height="19" fill="#4a908a"/>
<rect x="804.9" y="512.4" width="3.0" height="19" fill="#0f3a30"/>
<rect x="807.9" y="512.4" width="8.3" height="19" fill="#1e90ff"/>
<rect x="816.2" y="512.4" width="0.8" height="19" fill="#7fffd4"/>
</g>
<clipPath id="b11"><path d="M642.9 549.5H992.0Q994.0 549.5 994.0 551.5V566.5Q994.0 568.5 992.0 568.5H642.9Z"/></clipPath>
<g clip-path="url(#b11)">
<rect x="642.9" y="549.5" width="1.2" height="19" fill="#f0e68c"/>
<rect x="644.1" y="549.5" width="4.7" height="19" fill="#808080"/>
<rect x="648.8" y="549.5" width="2.0" height="19" fill="#4b0082"/>
<rect x="650.8" y="549.5" width="1.2" height="19" fill="#90ee90"/>
<rect x="652.0" y="549.5" width="0.9" height="19" fill="#800000"/>
<rect x="652.9" y="549.5" width="1.1" height="19" fill="#ffc0cb"/>
<rect x="654.0" y="549.5" width="1.9" height="19" fill="#556b2f"/>
<rect x="655.9" y="549.5" width="5.2" height="19" fill="#008b8b"/>
<rect x="661.1" y="549.5" width="13.9" height="19" fill="#ad4a14"/>
<rect x="675.0" y="549.5" width="0.9" height="19" fill="#3c4bab"/>
<rect x="675.9" y="549.5" width="3.2" height="19" fill="#708090"/>
<rect x="679.1" y="549.5" width="27.9" height="19" fill="#96522f"/>
<rect x="707.0" y="549.5" width="12.1" height="19" fill="#8a2a68"/>
<rect x="719.1" y="549.5" width="2.2" height="19" fill="#6035a0"/>
<rect x="721.3" y="549.5" width="13.6" height="19" fill="#3c4bab"/>
<rect x="734.9" y="549.5" width="8.2" height="19" fill="#07698f"/>
<rect x="743.1" y="549.5" width="21.9" height="19" fill="#b0736a"/>
<rect x="765.0" y="549.5" width="5.0" height="19" fill="#1e90ff"/>
<rect x="770.0" y="549.5" width="5.9" height="19" fill="#32cd32"/>
<rect x="775.9" y="549.5" width="3.1" height="19" fill="#ba55d3"/>
<rect x="779.0" y="549.5" width="3.9" height="19" fill="#40e0d0"/>
<rect x="782.9" y="549.5" width="9.2" height="19" fill="#000080"/>
<rect x="792.1" y="549.5" width="14.5" height="19" fill="#008080"/>
<rect x="806.6" y="549.5" width="7.4" height="19" fill="#adff2f"/>
<rect x="814.0" y="549.5" width="3.1" height="19" fill="#8a2be2"/>
<rect x="817.1" y="549.5" width="24.9" height="19" fill="#8a2a68"/>
<rect x="842.0" y="549.5" width="11.0" height="19" fill="#5f8e5a"/>
<rect x="853.0" y="549.5" width="4.0" height="19" fill="#0f3a30"/>
<rect x="857.0" y="549.5" width="2.8" height="19" fill="#b0736a"/>
<rect x="859.8" y="549.5" width="1.1" height="19" fill="#7b109b"/>
<rect x="860.9" y="549.5" width="4.1" height="19" fill="#40e0d0"/>
<rect x="865.0" y="549.5" width="11.0" height="19" fill="#808080"/>
<rect x="876.0" y="549.5" width="9.0" height="19" fill="#adff2f"/>
<rect x="885.0" y="549.5" width="4.1" height="19" fill="#8b0000"/>
<rect x="889.1" y="549.5" width="25.0" height="19" fill="#c71585"/>
<rect x="914.1" y="549.5" width="1.8" height="19" fill="#008080"/>
<rect x="915.9" y="549.5" width="19.0" height="19" fill="#363880"/>
<rect x="934.9" y="549.5" width="2.2" height="19" fill="#0aba20"/>
<rect x="937.1" y="549.5" width="24.8" height="19" fill="#125043"/>
<rect x="961.9" y="549.5" width="18.1" height="19" fill="#4a908a"/>
<rect x="980.0" y="549.5" width="3.0" height="19" fill="#b0736a"/>
<rect x="983.0" y="549.5" width="11.0" height="19" fill="#1e90ff"/>
</g>
<clipPath id="b12"><path d="M642.9 586.7H724.1Q726.1 586.7 726.1 588.7V603.7Q726.1 605.7 724.1 605.7H642.9Z"/></clipPath>
<g clip-path="url(#b12)">
<rect x="642.9" y="586.7" width="1.2" height="19" fill="#9acd32"/>
<rect x="644.1" y="586.7" width="1.1" height="19" fill="#ffc0cb"/>
<rect x="645.2" y="586.7" width="2.8" height="19" fill="#556b2f"/>
<rect x="648.0" y="586.7" width="1.1" height="19" fill="#7fffd4"/>
<rect x="649.1" y="586.7" width="2.8" height="19" fill="#008b8b"/>
<rect x="651.9" y="586.7" width="1.2" height="19" fill="#8a2be2"/>
<rect x="653.1" y="586.7" width="11.9" height="19" fill="#ad4a14"/>
<rect x="665.0" y="586.7" width="4.0" height="19" fill="#07698f"/>
<rect x="669.0" y="586.7" width="3.1" height="19" fill="#4a908a"/>
<rect x="672.1" y="586.7" width="2.7" height="19" fill="#b0736a"/>
<rect x="674.8" y="586.7" width="1.3" height="19" fill="#32cd32"/>
<rect x="676.1" y="586.7" width="2.0" height="19" fill="#a020c0"/>
<rect x="678.1" y="586.7" width="2.0" height="19" fill="#708090"/>
<rect x="680.1" y="586.7" width="4.0" height="19" fill="#8a2a68"/>
<rect x="684.1" y="586.7" width="3.9" height="19" fill="#5f8e5a"/>
<rect x="688.0" y="586.7" width="2.0" height="19" fill="#0aba20"/>
<rect x="690.0" y="586.7" width="4.2" height="19" fill="#adff2f"/>
<rect x="694.2" y="586.7" width="1.8" height="19" fill="#ffdead"/>
<rect x="696.0" y="586.7" width="3.0" height="19" fill="#c71585"/>
<rect x="699.0" y="586.7" width="11.1" height="19" fill="#363880"/>
<rect x="710.1" y="586.7" width="9.1" height="19" fill="#125043"/>
<rect x="719.2" y="586.7" width="0.8" height="19" fill="#b890a0"/>
<rect x="720.0" y="586.7" width="2.0" height="19" fill="#4a908a"/>
<rect x="722.0" y="586.7" width="3.2" height="19" fill="#1e90ff"/>
<rect x="725.2" y="586.7" width="0.9" height="19" fill="#f0e68c"/>
</g>
<clipPath id="b13"><path d="M642.9 623.9H655.9Q657.9 623.9 657.9 625.9V640.9Q657.9 642.9 655.9 642.9H642.9Z"/></clipPath>
<g clip-path="url(#b13)">
<rect x="642.9" y="623.9" width="0.7" height="19" fill="#808080"/>
<rect x="643.6" y="623.9" width="1.4" height="19" fill="#556b2f"/>
<rect x="645.0" y="623.9" width="2.0" height="19" fill="#96522f"/>
<rect x="647.0" y="623.9" width="1.3" height="19" fill="#07698f"/>
<rect x="648.3" y="623.9" width="1.0" height="19" fill="#584a82"/>
<rect x="649.3" y="623.9" width="1.6" height="19" fill="#5f8e5a"/>
<rect x="650.9" y="623.9" width="1.2" height="19" fill="#40e0d0"/>
<rect x="652.1" y="623.9" width="3.9" height="19" fill="#c71585"/>
<rect x="656.0" y="623.9" width="1.9" height="19" fill="#125043"/>
</g>
<clipPath id="b14"><path d="M642.9 661.0H1434.0Q1436.0 661.0 1436.0 663.0V678.0Q1436.0 680.0 1434.0 680.0H642.9Z"/></clipPath>
<g clip-path="url(#b14)">
<rect x="642.9" y="661.0" width="4.1" height="19" fill="#1e90ff"/>
<rect x="647.0" y="661.0" width="2.0" height="19" fill="#32cd32"/>
<rect x="649.0" y="661.0" width="4.8" height="19" fill="#40e0d0"/>
<rect x="653.8" y="661.0" width="3.1" height="19" fill="#000080"/>
<rect x="656.9" y="661.0" width="5.0" height="19" fill="#f0e68c"/>
<rect x="661.9" y="661.0" width="1.1" height="19" fill="#800000"/>
<rect x="663.0" y="661.0" width="6.1" height="19" fill="#008080"/>
<rect x="669.1" y="661.0" width="0.9" height="19" fill="#808080"/>
<rect x="670.0" y="661.0" width="14.2" height="19" fill="#4b0082"/>
<rect x="684.2" y="661.0" width="2.9" height="19" fill="#006400"/>
<rect x="687.1" y="661.0" width="1.1" height="19" fill="#32cd32"/>
<rect x="688.2" y="661.0" width="5.9" height="19" fill="#a9a9a9"/>
<rect x="694.1" y="661.0" width="12.0" height="19" fill="#808000"/>
<rect x="706.1" y="661.0" width="2.0" height="19" fill="#800000"/>
<rect x="708.1" y="661.0" width="7.0" height="19" fill="#ffc0cb"/>
<rect x="715.1" y="661.0" width="3.8" height="19" fill="#556b2f"/>
<rect x="718.9" y="661.0" width="2.0" height="19" fill="#7fffd4"/>
<rect x="720.9" y="661.0" width="25.1" height="19" fill="#008b8b"/>
<rect x="746.0" y="661.0" width="1.8" height="19" fill="#8a2be2"/>
<rect x="747.8" y="661.0" width="1.2" height="19" fill="#000080"/>
<rect x="749.0" y="661.0" width="1.7" height="19" fill="#708090"/>
<rect x="750.7" y="661.0" width="2.3" height="19" fill="#23973a"/>
<rect x="753.0" y="661.0" width="3.1" height="19" fill="#6a3050"/>
<rect x="756.1" y="661.0" width="0.9" height="19" fill="#2a0a1a"/>
<rect x="757.0" y="661.0" width="27.2" height="19" fill="#ad4a14"/>
<rect x="784.2" y="661.0" width="8.8" height="19" fill="#96522f"/>
<rect x="793.0" y="661.0" width="5.9" height="19" fill="#8a2a68"/>
<rect x="798.9" y="661.0" width="2.2" height="19" fill="#006050"/>
<rect x="801.1" y="661.0" width="3.7" height="19" fill="#5f8e5a"/>
<rect x="804.8" y="661.0" width="2.9" height="19" fill="#363880"/>
<rect x="807.7" y="661.0" width="21.4" height="19" fill="#3c4bab"/>
<rect x="829.1" y="661.0" width="0.9" height="19" fill="#96522f"/>
<rect x="830.0" y="661.0" width="58.9" height="19" fill="#07698f"/>
<rect x="888.9" y="661.0" width="4.2" height="19" fill="#0aba20"/>
<rect x="893.1" y="661.0" width="2.6" height="19" fill="#125043"/>
<rect x="895.7" y="661.0" width="3.3" height="19" fill="#4aa0a0"/>
<rect x="899.0" y="661.0" width="5.9" height="19" fill="#584a82"/>
<rect x="904.9" y="661.0" width="44.8" height="19" fill="#b0736a"/>
<rect x="949.7" y="661.0" width="2.2" height="19" fill="#7b109b"/>
<rect x="951.9" y="661.0" width="2.6" height="19" fill="#07698f"/>
<rect x="954.5" y="661.0" width="4.1" height="19" fill="#32cd32"/>
<rect x="958.6" y="661.0" width="2.3" height="19" fill="#000080"/>
<rect x="960.9" y="661.0" width="1.2" height="19" fill="#ffa500"/>
<rect x="962.1" y="661.0" width="4.0" height="19" fill="#008080"/>
<rect x="966.1" y="661.0" width="2.9" height="19" fill="#adff2f"/>
<rect x="969.0" y="661.0" width="5.9" height="19" fill="#8b4513"/>
<rect x="974.9" y="661.0" width="5.0" height="19" fill="#006400"/>
<rect x="979.9" y="661.0" width="1.8" height="19" fill="#32cd32"/>
<rect x="981.7" y="661.0" width="1.3" height="19" fill="#b890a0"/>
<rect x="983.0" y="661.0" width="4.1" height="19" fill="#8b0000"/>
<rect x="987.1" y="661.0" width="4.9" height="19" fill="#9acd32"/>
<rect x="992.0" y="661.0" width="3.9" height="19" fill="#c71585"/>
<rect x="995.9" y="661.0" width="2.4" height="19" fill="#ffc0cb"/>
<rect x="998.3" y="661.0" width="1.8" height="19" fill="#7fffd4"/>
<rect x="1000.1" y="661.0" width="1.9" height="19" fill="#ff4500"/>
<rect x="1002.0" y="661.0" width="4.0" height="19" fill="#6a9fa8"/>
<rect x="1006.0" y="661.0" width="5.2" height="19" fill="#23973a"/>
<rect x="1011.2" y="661.0" width="3.7" height="19" fill="#6a3050"/>
<rect x="1014.9" y="661.0" width="1.1" height="19" fill="#2a0a1a"/>
<rect x="1016.0" y="661.0" width="6.6" height="19" fill="#a020c0"/>
<rect x="1022.6" y="661.0" width="4.4" height="19" fill="#708090"/>
<rect x="1027.0" y="661.0" width="8.1" height="19" fill="#96522f"/>
<rect x="1035.1" y="661.0" width="28.9" height="19" fill="#8a2a68"/>
<rect x="1064.0" y="661.0" width="3.8" height="19" fill="#5f8e5a"/>
<rect x="1067.8" y="661.0" width="5.0" height="19" fill="#3c4bab"/>
<rect x="1072.8" y="661.0" width="6.2" height="19" fill="#2aa080"/>
<rect x="1079.0" y="661.0" width="5.0" height="19" fill="#7b5560"/>
<rect x="1084.0" y="661.0" width="1.8" height="19" fill="#07698f"/>
<rect x="1085.8" y="661.0" width="3.2" height="19" fill="#00a000"/>
<rect x="1089.0" y="661.0" width="10.8" height="19" fill="#4a908a"/>
<rect x="1099.8" y="661.0" width="1.5" height="19" fill="#8b4513"/>
<rect x="1101.3" y="661.0" width="3.7" height="19" fill="#1e90ff"/>
<rect x="1105.0" y="661.0" width="1.1" height="19" fill="#32cd32"/>
<rect x="1106.1" y="661.0" width="1.1" height="19" fill="#ba55d3"/>
<rect x="1107.2" y="661.0" width="2.9" height="19" fill="#40e0d0"/>
<rect x="1110.1" y="661.0" width="2.0" height="19" fill="#f0e68c"/>
<rect x="1112.1" y="661.0" width="3.0" height="19" fill="#8b0000"/>
<rect x="1115.1" y="661.0" width="4.1" height="19" fill="#008080"/>
<rect x="1119.2" y="661.0" width="32.6" height="19" fill="#808080"/>
<rect x="1151.8" y="661.0" width="64.3" height="19" fill="#adff2f"/>
<rect x="1216.1" y="661.0" width="7.9" height="19" fill="#ee82ee"/>
<rect x="1224.0" y="661.0" width="2.7" height="19" fill="#8b4513"/>
<rect x="1226.7" y="661.0" width="1.3" height="19" fill="#4b0082"/>
<rect x="1228.0" y="661.0" width="4.1" height="19" fill="#006400"/>
<rect x="1232.1" y="661.0" width="4.6" height="19" fill="#32cd32"/>
<rect x="1236.7" y="661.0" width="2.2" height="19" fill="#9acd32"/>
<rect x="1238.9" y="661.0" width="2.0" height="19" fill="#c71585"/>
<rect x="1240.9" y="661.0" width="1.3" height="19" fill="#ffa500"/>
<rect x="1242.2" y="661.0" width="2.6" height="19" fill="#ffc0cb"/>
<rect x="1244.8" y="661.0" width="3.0" height="19" fill="#556b2f"/>
<rect x="1247.8" y="661.0" width="4.3" height="19" fill="#7fffd4"/>
<rect x="1252.1" y="661.0" width="1.5" height="19" fill="#008080"/>
<rect x="1253.6" y="661.0" width="2.6" height="19" fill="#8a2be2"/>
<rect x="1256.2" y="661.0" width="2.9" height="19" fill="#0a0a96"/>
<rect x="1259.1" y="661.0" width="1.8" height="19" fill="#6a9fa8"/>
<rect x="1260.9" y="661.0" width="7.4" height="19" fill="#23973a"/>
<rect x="1268.3" y="661.0" width="3.7" height="19" fill="#ad4a14"/>
<rect x="1272.0" y="661.0" width="2.9" height="19" fill="#584a82"/>
<rect x="1274.9" y="661.0" width="1.9" height="19" fill="#96522f"/>
<rect x="1276.8" y="661.0" width="2.5" height="19" fill="#8a2a68"/>
<rect x="1279.3" y="661.0" width="2.6" height="19" fill="#6035a0"/>
<rect x="1281.9" y="661.0" width="2.2" height="19" fill="#006050"/>
<rect x="1284.1" y="661.0" width="22.8" height="19" fill="#363880"/>
<rect x="1306.9" y="661.0" width="3.0" height="19" fill="#2aa080"/>
<rect x="1309.9" y="661.0" width="1.1" height="19" fill="#96522f"/>
<rect x="1311.0" y="661.0" width="1.5" height="19" fill="#07698f"/>
<rect x="1312.5" y="661.0" width="1.4" height="19" fill="#0aba20"/>
<rect x="1313.9" y="661.0" width="28.2" height="19" fill="#125043"/>
<rect x="1342.1" y="661.0" width="1.2" height="19" fill="#0aba20"/>
<rect x="1343.3" y="661.0" width="1.7" height="19" fill="#b890a0"/>
<rect x="1345.0" y="661.0" width="19.3" height="19" fill="#4a908a"/>
<rect x="1364.3" y="661.0" width="2.6" height="19" fill="#8b4513"/>
<rect x="1366.9" y="661.0" width="56.6" height="19" fill="#1e90ff"/>
<rect x="1423.5" y="661.0" width="0.8" height="19" fill="#40e0d0"/>
<rect x="1424.3" y="661.0" width="1.8" height="19" fill="#000080"/>
<rect x="1426.1" y="661.0" width="1.9" height="19" fill="#8b0000"/>
<rect x="1428.0" y="661.0" width="1.1" height="19" fill="#008080"/>
<rect x="1429.1" y="661.0" width="5.5" height="19" fill="#808080"/>
<rect x="1434.6" y="661.0" width="1.4" height="19" fill="#adff2f"/>
</g>
<clipPath id="b15"><path d="M642.9 698.2H687.1Q689.1 698.2 689.1 700.2V715.2Q689.1 717.2 687.1 717.2H642.9Z"/></clipPath>
<g clip-path="url(#b15)">
<rect x="642.9" y="698.2" width="2.1" height="19" fill="#ba55d3"/>
<rect x="645.0" y="698.2" width="7.9" height="19" fill="#808000"/>
<rect x="652.9" y="698.2" width="4.0" height="19" fill="#ad4a14"/>
<rect x="656.9" y="698.2" width="4.2" height="19" fill="#07698f"/>
<rect x="661.1" y="698.2" width="1.8" height="19" fill="#b0736a"/>
<rect x="662.9" y="698.2" width="2.3" height="19" fill="#8a2a68"/>
<rect x="665.2" y="698.2" width="4.5" height="19" fill="#adff2f"/>
<rect x="669.7" y="698.2" width="1.3" height="19" fill="#006400"/>
<rect x="671.0" y="698.2" width="3.2" height="19" fill="#32cd32"/>
<rect x="674.2" y="698.2" width="6.3" height="19" fill="#125043"/>
<rect x="680.5" y="698.2" width="8.6" height="19" fill="#1e90ff"/>
</g>
<clipPath id="b16"><path d="M642.9 735.4H777.0Q779.0 735.4 779.0 737.4V752.4Q779.0 754.4 777.0 754.4H642.9Z"/></clipPath>
<g clip-path="url(#b16)">
<rect x="642.9" y="735.4" width="4.1" height="19" fill="#800000"/>
<rect x="647.0" y="735.4" width="0.8" height="19" fill="#a9a9a9"/>
<rect x="647.8" y="735.4" width="1.2" height="19" fill="#ee82ee"/>
<rect x="649.0" y="735.4" width="1.9" height="19" fill="#4b0082"/>
<rect x="650.9" y="735.4" width="1.0" height="19" fill="#808000"/>
<rect x="651.9" y="735.4" width="1.2" height="19" fill="#008080"/>
<rect x="653.1" y="735.4" width="3.8" height="19" fill="#ad4a14"/>
<rect x="656.9" y="735.4" width="4.2" height="19" fill="#5f8e5a"/>
<rect x="661.1" y="735.4" width="0.9" height="19" fill="#3c4bab"/>
<rect x="662.0" y="735.4" width="7.8" height="19" fill="#07698f"/>
<rect x="669.8" y="735.4" width="2.4" height="19" fill="#0aba20"/>
<rect x="672.2" y="735.4" width="6.6" height="19" fill="#b0736a"/>
<rect x="678.8" y="735.4" width="1.0" height="19" fill="#f0e68c"/>
<rect x="679.8" y="735.4" width="1.3" height="19" fill="#006400"/>
<rect x="681.1" y="735.4" width="3.0" height="19" fill="#ffdead"/>
<rect x="684.1" y="735.4" width="1.0" height="19" fill="#808000"/>
<rect x="685.1" y="735.4" width="3.0" height="19" fill="#708090"/>
<rect x="688.1" y="735.4" width="2.0" height="19" fill="#96522f"/>
<rect x="690.1" y="735.4" width="8.9" height="19" fill="#8a2a68"/>
<rect x="699.0" y="735.4" width="7.0" height="19" fill="#00a000"/>
<rect x="706.0" y="735.4" width="1.1" height="19" fill="#8b4513"/>
<rect x="707.1" y="735.4" width="1.1" height="19" fill="#008080"/>
<rect x="708.2" y="735.4" width="10.7" height="19" fill="#808080"/>
<rect x="718.9" y="735.4" width="12.3" height="19" fill="#adff2f"/>
<rect x="731.2" y="735.4" width="1.9" height="19" fill="#ee82ee"/>
<rect x="733.1" y="735.4" width="5.9" height="19" fill="#8b4513"/>
<rect x="739.0" y="735.4" width="4.0" height="19" fill="#4b0082"/>
<rect x="743.0" y="735.4" width="1.0" height="19" fill="#32cd32"/>
<rect x="744.0" y="735.4" width="2.1" height="19" fill="#9acd32"/>
<rect x="746.1" y="735.4" width="0.9" height="19" fill="#808000"/>
<rect x="747.0" y="735.4" width="1.9" height="19" fill="#6a9fa8"/>
<rect x="748.9" y="735.4" width="7.1" height="19" fill="#23973a"/>
<rect x="756.0" y="735.4" width="2.2" height="19" fill="#363880"/>
<rect x="758.2" y="735.4" width="2.8" height="19" fill="#125043"/>
<rect x="761.0" y="735.4" width="1.2" height="19" fill="#0aba20"/>
<rect x="762.2" y="735.4" width="2.8" height="19" fill="#4a908a"/>
<rect x="765.0" y="735.4" width="14.0" height="19" fill="#1e90ff"/>
</g>
<clipPath id="b17"><path d="M642.9 772.5H664.0Q666.0 772.5 666.0 774.5V789.5Q666.0 791.5 664.0 791.5H642.9Z"/></clipPath>
<g clip-path="url(#b17)">
<rect x="642.9" y="772.5" width="2.1" height="19" fill="#f0e68c"/>
<rect x="645.0" y="772.5" width="2.2" height="19" fill="#3c4bab"/>
<rect x="647.2" y="772.5" width="5.2" height="19" fill="#b0736a"/>
<rect x="652.4" y="772.5" width="0.5" height="19" fill="#808080"/>
<rect x="652.9" y="772.5" width="5.2" height="19" fill="#8a2a68"/>
<rect x="658.1" y="772.5" width="1.8" height="19" fill="#5f8e5a"/>
<rect x="659.9" y="772.5" width="1.0" height="19" fill="#f0e68c"/>
<rect x="660.9" y="772.5" width="1.8" height="19" fill="#c71585"/>
<rect x="662.7" y="772.5" width="0.7" height="19" fill="#363880"/>
<rect x="663.4" y="772.5" width="1.7" height="19" fill="#4a908a"/>
<rect x="665.1" y="772.5" width="0.9" height="19" fill="#1e90ff"/>
</g>
<clipPath id="b18"><path d="M642.9 809.7H655.1Q657.1 809.7 657.1 811.7V826.7Q657.1 828.7 655.1 828.7H642.9Z"/></clipPath>
<g clip-path="url(#b18)">
<rect x="642.9" y="809.7" width="1.6" height="19" fill="#008080"/>
<rect x="644.5" y="809.7" width="0.5" height="19" fill="#808080"/>
<rect x="645.0" y="809.7" width="2.0" height="19" fill="#96522f"/>
<rect x="647.0" y="809.7" width="1.2" height="19" fill="#8a2a68"/>
<rect x="648.2" y="809.7" width="0.8" height="19" fill="#b0736a"/>
<rect x="649.0" y="809.7" width="2.0" height="19" fill="#8a2a68"/>
<rect x="651.0" y="809.7" width="1.1" height="19" fill="#5f8e5a"/>
<rect x="652.1" y="809.7" width="2.0" height="19" fill="#c71585"/>
<rect x="654.1" y="809.7" width="2.0" height="19" fill="#363880"/>
<rect x="656.1" y="809.7" width="1.0" height="19" fill="#4a908a"/>
</g>
<clipPath id="b19"><path d="M642.9 846.9H655.0Q657.0 846.9 657.0 848.9V863.9Q657.0 865.9 655.0 865.9H642.9Z"/></clipPath>
<g clip-path="url(#b19)">
<rect x="642.9" y="846.9" width="1.3" height="19" fill="#ad4a14"/>
<rect x="644.2" y="846.9" width="3.8" height="19" fill="#6035a0"/>
<rect x="648.0" y="846.9" width="7.7" height="19" fill="#125043"/>
<rect x="655.7" y="846.9" width="1.3" height="19" fill="#1e90ff"/>
</g>
</g>
<line x1="642.5" y1="154.5" x2="1540.5" y2="154.5" stroke="#d0d0d0" stroke-width="1"/>
<line x1="1540.5" y1="154.5" x2="1540.5" y2="858" stroke="#d0d0d0" stroke-width="1"/>
<line x1="642.5" y1="154.5" x2="642.5" y2="858" stroke="#d0d0d0" stroke-width="1"/>
<line x1="642.5" y1="853.5" x2="1540.5" y2="853.5" stroke="#d0d0d0" stroke-width="1"/>
<line x1="642.5" y1="853" x2="642.5" y2="858" stroke="#d0d0d0" stroke-width="1"/>
<line x1="770.5" y1="853" x2="770.5" y2="858" stroke="#d0d0d0" stroke-width="1"/>
<line x1="898.5" y1="853" x2="898.5" y2="858" stroke="#d0d0d0" stroke-width="1"/>
<line x1="1027.5" y1="853" x2="1027.5" y2="858" stroke="#d0d0d0" stroke-width="1"/>
<line x1="1155.5" y1="853" x2="1155.5" y2="858" stroke="#d0d0d0" stroke-width="1"/>
<line x1="1283.5" y1="853" x2="1283.5" y2="858" stroke="#d0d0d0" stroke-width="1"/>
<line x1="1412.5" y1="853" x2="1412.5" y2="858" stroke="#d0d0d0" stroke-width="1"/>
<line x1="1540.5" y1="853" x2="1540.5" y2="858" stroke="#d0d0d0" stroke-width="1"/>
</svg>
<div class="t" style="left:412px;top:553px;font-size:14px;line-height:14px;color:#000;transform-origin:0 0;transform:rotate(-90deg) scaleX(1.02)">TissueCategory</div>
</body></html>
